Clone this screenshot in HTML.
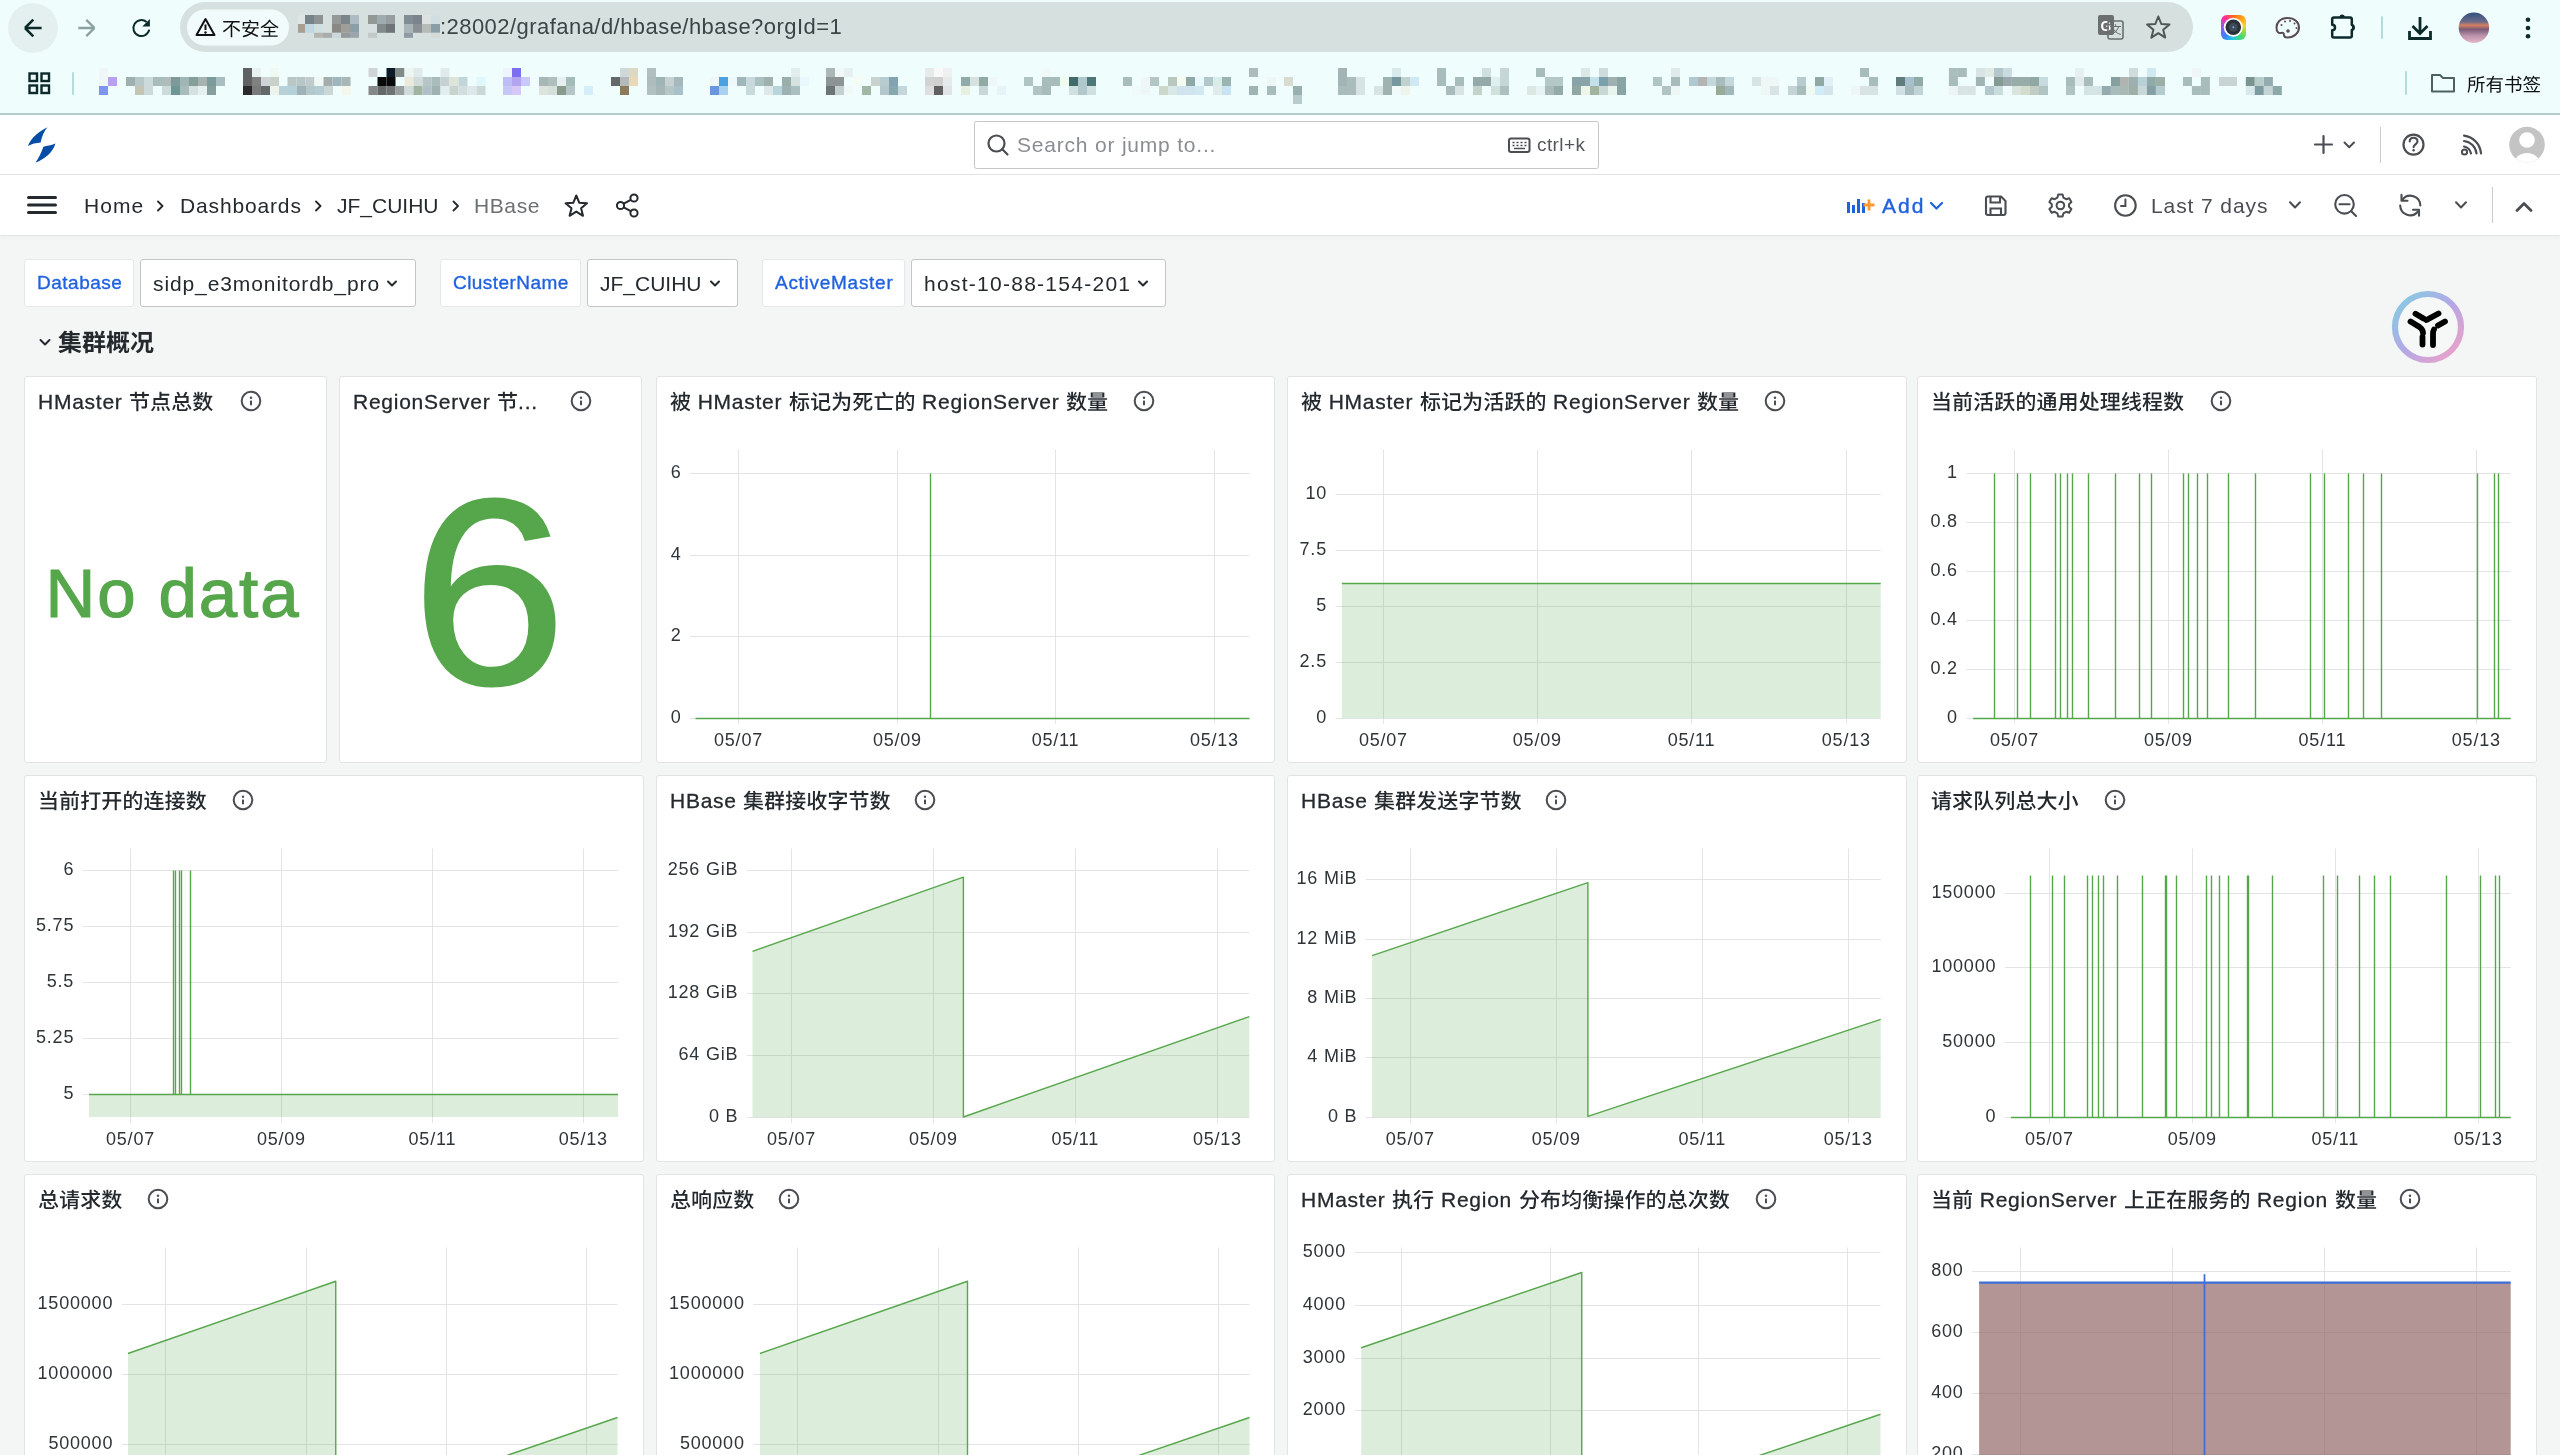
<!DOCTYPE html><html><head><meta charset='utf-8'><style>
*{box-sizing:border-box;margin:0;padding:0}
html,body{width:2560px;height:1455px;overflow:hidden;background:#f4f5f5;font-family:"Liberation Sans", sans-serif;color:#24292e}
.a{position:absolute}
.t{position:absolute;white-space:nowrap;line-height:1}
.panel{position:absolute;background:#fff;border:1px solid #e2e3e5;border-radius:3px}
.ptitle{position:absolute;white-space:nowrap;font-size:21px;font-weight:500;line-height:1;color:#24292e;letter-spacing:0.75px;-webkit-text-stroke:0.3px #24292e}
.ax{font-family:"Liberation Sans", sans-serif;font-size:18px;fill:#2f3439;letter-spacing:0.8px}
</style></head><body><div style='position:absolute;left:0;top:0;width:2560px;height:1455px;overflow:hidden;background:#f4f5f5;will-change:transform'>
<svg width='0' height='0' style='position:absolute'><defs><path id='gr6587' d='M423 57C453 106 485 173 497 214L580 187C566 146 531 81 501 33ZM50 216V290H206C265 442 344 573 447 680C337 772 202 840 36 887C51 905 75 940 83 958C250 904 389 832 502 734C615 834 751 908 915 953C928 932 950 900 967 884C807 844 671 773 560 679C661 576 738 448 796 290H954V216ZM504 627C410 532 336 418 284 290H711C661 425 592 536 504 627Z'/><path id='gr4e0d' d='M559 402C678 482 828 600 899 677L960 619C885 542 733 430 615 354ZM69 110V187H514C415 358 243 527 44 625C60 642 83 672 95 691C234 618 358 515 459 399V958H540V296C566 261 589 224 610 187H931V110Z'/><path id='gr5b89' d='M414 57C430 87 447 124 461 155H93V358H168V226H829V358H908V155H549C534 122 510 74 491 38ZM656 502C625 583 581 648 524 702C452 673 379 647 310 624C335 588 362 546 389 502ZM299 502C263 560 225 614 193 657C276 685 367 718 456 755C359 820 234 862 82 889C98 905 121 939 130 957C293 922 429 870 536 789C662 844 778 903 852 953L914 888C837 839 723 784 599 732C660 671 707 595 742 502H935V431H430C457 381 482 331 502 284L421 268C401 319 372 375 341 431H69V502Z'/><path id='gr5168' d='M493 29C392 188 209 335 26 418C45 434 67 459 78 479C118 459 158 436 197 411V476H461V632H203V699H461V864H76V932H929V864H539V699H809V632H539V476H809V410C847 436 885 460 925 483C936 461 958 435 977 420C814 334 666 230 542 86L559 60ZM200 409C313 336 418 243 500 141C595 250 696 334 807 409Z'/><path id='gr6240' d='M534 141V474C534 613 523 789 404 912C420 922 451 947 462 962C591 832 611 625 611 474V451H766V957H841V451H958V379H611V196C726 178 854 152 939 116L888 52C806 90 659 122 534 141ZM172 519V489V359H370V519ZM441 61C362 97 218 124 98 139V489C98 619 93 792 29 914C45 923 77 948 90 962C147 858 165 713 170 587H442V291H172V195C284 181 408 159 489 124Z'/><path id='gr6709' d='M391 40C379 83 365 127 347 170H63V240H316C252 372 160 494 40 576C54 590 78 617 88 634C151 589 207 535 255 474V959H329V761H748V865C748 880 743 886 726 886C707 887 646 888 580 885C590 906 601 937 605 957C691 957 746 957 779 946C812 933 822 910 822 866V356H336C359 318 379 280 397 240H939V170H427C442 133 455 95 467 58ZM329 591H748V696H329ZM329 527V424H748V527Z'/><path id='gr4e66' d='M717 120C781 163 864 224 905 263L951 206C909 169 824 110 762 70ZM126 215V288H418V485H60V557H418V959H494V557H864C853 702 839 765 819 783C809 792 798 793 777 793C754 793 689 792 626 786C640 807 650 837 652 859C713 862 773 863 804 861C839 858 862 852 882 830C912 801 928 720 943 519C944 508 946 485 946 485H800V215H494V43H418V215ZM494 485V288H726V485Z'/><path id='gr7b7e' d='M424 600C460 665 498 752 512 805L576 779C561 727 521 642 484 578ZM176 628C219 690 266 772 286 823L349 792C329 741 280 661 236 601ZM701 477H294V541H701ZM574 35C548 108 503 179 449 226C460 232 477 242 491 252C388 366 204 460 35 510C52 526 70 551 80 570C152 546 225 515 294 477C370 436 441 387 501 333C606 429 773 518 916 561C927 541 948 513 964 499C816 462 637 378 542 294L563 270L526 251C542 233 558 212 573 190H665C698 233 730 288 744 323L815 305C802 273 774 228 745 190H939V128H611C624 103 635 78 645 52ZM185 35C154 134 99 233 37 297C54 307 85 326 99 338C133 298 167 247 197 190H241C266 234 289 287 299 322L366 302C358 272 338 229 316 190H477V128H227C237 103 247 78 256 53ZM759 583C717 680 658 789 600 867H63V934H934V867H686C734 789 786 690 827 603Z'/><path id='gb96c6' d='M438 601V653H48V748H335C243 799 124 841 15 864C40 889 74 934 92 963C209 930 338 869 438 797V968H557V793C656 865 784 925 901 958C917 930 951 885 976 862C871 839 756 797 667 748H952V653H557V601ZM481 339V379H278V339ZM465 55C475 77 486 103 495 127H334C351 102 366 77 381 52L259 28C213 115 132 219 21 298C48 314 86 352 105 377C124 362 142 347 159 331V618H278V592H926V500H596V458H858V379H596V339H857V261H596V219H902V127H619C608 95 590 56 572 25ZM481 261H278V219H481ZM481 458V500H278V458Z'/><path id='gb7fa4' d='M822 29C810 82 784 155 763 202L846 223H628L691 200C681 154 654 87 623 37L527 70C553 117 577 178 586 223H526V331H674V422H538V532H674V637H504V749H674V969H789V749H971V637H789V532H932V422H789V331H951V223H864C886 179 913 116 938 56ZM356 342V405H268L277 342ZM87 77V177H180L176 242H32V342H166L155 405H82V505H131C106 581 71 646 20 695C43 716 84 765 97 788C111 774 123 760 135 745V970H243V921H484V582H222C231 557 239 532 246 505H466V342H515V242H466V77ZM356 242H288L293 177H356ZM243 685H368V818H243Z'/><path id='gb6982' d='M134 30V232H41V341H134V344C112 464 67 607 17 692C34 720 60 764 71 796C94 758 115 708 134 652V969H239V529C255 569 270 610 279 639L337 545V704C337 752 309 790 290 806C307 823 336 863 345 884C361 865 387 843 534 754L547 797L630 756C616 704 578 619 545 555L468 589C480 615 493 643 504 672L428 713V528H588V449C597 469 616 509 622 530C631 522 666 516 698 516H729C694 654 629 796 510 915C537 928 576 956 595 973C664 900 716 819 754 735V849C754 904 758 920 774 936C788 951 810 957 833 957C845 957 865 957 878 957C896 957 914 951 927 942C941 932 949 917 955 896C960 874 964 817 965 767C945 760 919 746 904 734C905 780 904 819 902 836C900 846 897 854 893 858C890 862 884 863 878 863C872 863 865 863 860 863C854 863 849 861 846 858C843 855 843 848 843 843V564H815L827 516H959L960 419H845C858 332 862 249 863 179H947V77H619V179H771C770 249 765 332 750 419H702L735 226H645C639 272 620 397 612 418C605 435 599 442 588 446V81H337V534C320 501 258 387 239 356V341H316V232H239V30ZM503 345V432H428V345ZM503 260H428V176H503Z'/><path id='gb51b5' d='M55 168C117 218 192 292 223 344L311 253C276 202 200 134 136 88ZM30 765 122 854C186 759 255 646 311 545L233 460C168 571 86 693 30 765ZM472 193H785V404H472ZM357 79V519H453C443 689 418 807 235 876C262 898 294 941 307 971C521 883 559 730 572 519H655V814C655 922 678 958 775 958C792 958 840 958 859 958C942 958 970 913 980 748C949 740 899 721 876 701C873 830 868 850 847 850C837 850 802 850 794 850C774 850 770 846 770 813V519H908V79Z'/><path id='gm8282' d='M97 391V482H348V962H448V482H761V717C761 731 755 735 735 735C716 736 646 736 580 734C592 762 605 804 608 833C702 833 766 833 807 818C848 802 859 773 859 719V391ZM626 36V143H375V36H279V143H53V233H279V340H375V233H626V340H726V233H949V143H726V36Z'/><path id='gm70b9' d='M250 424H746V581H250ZM331 752C344 819 352 905 352 956L448 944C447 894 435 809 421 744ZM537 753C567 816 597 902 607 953L699 929C687 878 654 795 624 734ZM741 746C790 811 845 900 868 957L958 920C934 863 876 777 826 714ZM168 721C137 795 87 875 36 920L123 962C177 909 227 823 258 744ZM160 336V669H842V336H542V223H913V134H542V36H446V336Z'/><path id='gm603b' d='M752 667C810 736 868 830 888 893L966 846C945 782 884 692 825 625ZM275 635V832C275 927 308 954 440 954C467 954 624 954 652 954C753 954 783 924 796 805C768 800 728 785 706 771C701 855 692 868 644 868C607 868 476 868 448 868C386 868 375 863 375 831V635ZM127 650C110 729 78 818 38 869L126 910C169 848 201 751 217 666ZM279 323H722V477H279ZM178 234V567H481L415 619C478 663 552 732 588 780L658 719C621 674 548 609 484 567H829V234H676C708 185 741 129 771 76L673 36C650 96 609 175 572 234H376L434 206C417 157 372 89 329 39L248 76C286 124 324 188 342 234Z'/><path id='gm6570' d='M435 52C418 90 387 147 363 183L424 211C451 179 483 130 514 85ZM79 85C105 126 130 181 138 216L210 184C201 149 174 96 147 57ZM394 630C373 674 345 713 312 746C279 729 245 713 212 698L250 630ZM97 729C144 748 197 773 246 799C185 840 113 869 35 886C51 904 69 937 78 958C169 933 253 896 323 841C355 860 383 878 405 895L462 833C440 818 413 802 384 785C436 727 476 656 501 568L450 549L435 552H288L307 506L224 490C216 510 208 531 198 552H66V630H158C138 667 116 701 97 729ZM246 35V218H47V294H217C168 352 97 406 32 433C50 451 71 483 82 504C138 473 198 425 246 372V478H334V353C378 386 429 427 453 450L504 383C483 369 410 323 360 294H532V218H334V35ZM621 42C598 219 553 388 474 493C494 506 530 537 544 552C566 519 587 482 605 441C626 529 652 610 686 683C631 773 555 842 450 891C467 909 492 948 501 968C600 916 675 851 732 769C780 847 840 910 914 955C928 932 955 898 976 881C896 838 833 769 783 683C834 582 866 460 887 313H953V226H675C688 171 699 113 708 54ZM799 313C785 416 765 505 735 583C702 501 677 410 660 313Z'/><path id='gm88ab' d='M132 74C159 116 191 172 207 210H40V295H258C203 415 112 536 24 606C37 623 58 671 65 696C98 667 133 631 166 590V963H254V577C286 621 319 672 336 702L385 629L316 544C343 519 375 486 407 454L351 402C333 430 303 470 277 499L254 473V467C298 396 337 320 364 243L317 206L303 210H220L285 171C267 135 234 80 205 38ZM420 178V443C420 582 409 768 301 897C320 909 356 940 370 958C469 838 499 662 505 517C538 615 583 700 640 770C580 822 511 861 437 886C455 905 476 940 487 963C566 932 638 890 701 834C761 889 831 931 914 960C927 935 953 898 973 880C892 856 823 819 765 770C836 686 890 579 921 444L865 422L849 425H721V266H849C838 309 827 351 816 380L896 399C918 346 941 263 960 190L893 175L879 178H721V36H632V178ZM632 266V425H507V266ZM813 509C787 585 749 652 701 708C652 651 614 584 586 509Z'/><path id='gm6807' d='M466 106V194H905V106ZM776 559C822 661 865 792 879 873L965 841C949 760 903 632 856 533ZM480 537C454 642 411 750 357 820C378 831 415 856 432 870C485 792 536 672 565 556ZM422 345V433H628V846C628 859 624 863 610 863C596 864 552 864 505 862C518 891 530 932 533 959C602 959 650 958 682 942C715 926 724 898 724 848V433H959V345ZM190 36V241H43V330H170C140 449 81 586 20 660C37 684 61 725 71 751C116 691 157 597 190 498V963H283V461C314 508 349 563 364 594L417 519C398 493 312 386 283 354V330H408V241H283V36Z'/><path id='gm8bb0' d='M115 115C170 165 242 236 275 281L343 214C307 170 234 103 178 57ZM43 347V438H196V775C196 827 166 863 147 879C163 893 188 928 198 948C214 927 243 904 412 783C402 764 389 726 383 700L290 764V347ZM417 104V198H805V429H436V808C436 920 475 949 597 949C623 949 781 949 808 949C924 949 954 902 967 734C939 728 898 712 876 695C870 833 860 858 802 858C766 858 633 858 605 858C544 858 534 850 534 808V519H805V570H900V104Z'/><path id='gm4e3a' d='M150 97C188 144 232 209 250 250L337 211C317 169 272 107 233 62ZM491 517C539 576 595 659 618 711L703 667C678 615 620 537 570 479ZM399 38V164C399 198 398 234 396 273H78V369H385C358 541 279 733 52 878C76 894 112 927 127 948C376 784 458 563 484 369H805C793 685 779 814 749 844C738 857 727 860 706 859C680 859 619 859 554 854C573 882 586 924 588 952C649 955 711 957 748 952C787 948 813 938 838 905C878 858 891 715 905 320C906 307 907 273 907 273H493C495 235 496 198 496 164V38Z'/><path id='gm6b7b' d='M861 315C813 364 742 421 670 471V187H948V96H55V187H240C201 314 129 453 33 540C54 555 86 583 102 601C155 551 201 488 240 419H421C403 491 378 554 347 610C311 574 263 535 223 505L169 573C211 606 259 650 295 688C228 774 141 835 39 876C60 891 93 929 106 951C315 860 472 673 530 349L470 327L453 330H285C307 283 326 234 342 187H575V789C575 899 601 930 700 930C720 930 819 930 839 930C927 930 952 882 963 738C936 731 899 715 877 698C873 815 867 843 832 843C811 843 730 843 713 843C676 843 670 835 670 789V567C760 514 856 454 931 393Z'/><path id='gm4ea1' d='M417 64C448 121 479 197 491 245H52V338H189V910H886V813H290V338H951V245H514L599 217C585 167 550 91 516 34Z'/><path id='gm7684' d='M545 465C598 538 663 637 692 698L772 648C740 589 672 493 619 423ZM593 34C562 166 508 300 442 387V197H279C296 154 316 101 332 51L229 34C223 83 208 148 195 197H81V937H168V860H442V396C464 410 500 434 515 448C548 402 580 344 608 279H845C833 660 819 812 788 846C776 859 765 862 745 862C720 862 660 862 595 856C613 882 625 922 627 948C684 951 744 952 779 948C817 943 842 934 867 900C908 850 920 693 935 237C935 225 935 192 935 192H642C658 147 672 101 684 55ZM168 281H355V471H168ZM168 775V553H355V775Z'/><path id='gm91cf' d='M266 214H728V261H266ZM266 119H728V165H266ZM175 67V312H823V67ZM49 350V419H953V350ZM246 610H453V657H246ZM545 610H757V657H545ZM246 512H453V559H246ZM545 512H757V559H545ZM46 869V940H957V869H545V820H871V757H545V711H851V458H157V711H453V757H132V820H453V869Z'/><path id='gm6d3b' d='M87 116C147 149 231 198 273 227L328 151C285 123 199 77 141 49ZM39 392C99 424 184 472 225 501L278 423C234 395 148 350 91 323ZM59 888 138 952C198 857 265 736 318 631L249 568C190 683 112 812 59 888ZM324 328V419H604V568H392V963H479V921H812V959H902V568H694V419H961V328H694V170C777 155 855 135 920 112L847 38C736 80 539 112 367 130C378 151 390 187 395 210C462 204 534 196 604 185V328ZM479 835V654H812V835Z'/><path id='gm8dc3' d='M159 158H308V313H159ZM856 44C758 82 591 115 445 134C456 155 469 189 472 211C527 205 584 197 642 187V391V398H437V486H639C628 623 581 785 385 902C407 918 438 951 452 970C595 877 666 761 702 646C745 788 811 900 914 966C928 941 957 906 978 888C851 818 779 666 744 486H951V398H735V392V170C804 155 870 139 925 119ZM29 835 51 925C153 896 288 857 414 821L403 739L289 770V607H401V525H289V394H391V77H79V394H205V792L152 805V487H77V824Z'/><path id='gm5f53' d='M114 112C166 182 218 280 238 344L329 305C307 241 255 147 200 78ZM788 69C760 147 709 252 667 319L750 350C794 285 848 188 891 101ZM112 828V922H776V964H877V386H551V36H448V386H132V481H776V603H166V694H776V828Z'/><path id='gm524d' d='M595 366V777H682V366ZM796 337V853C796 867 791 871 775 872C759 873 705 873 649 871C663 895 678 935 683 961C758 961 810 959 844 944C879 929 890 904 890 854V337ZM711 32C690 79 655 143 623 190H330L383 171C365 132 324 76 286 35L197 66C229 104 264 153 282 190H50V276H951V190H730C757 151 786 106 813 63ZM397 591V677H199V591ZM397 519H199V437H397ZM109 356V959H199V748H397V863C397 875 393 879 380 880C367 881 323 881 278 879C291 901 304 937 309 961C375 961 419 960 449 945C480 931 489 908 489 864V356Z'/><path id='gm901a' d='M57 130C116 182 193 255 229 301L298 237C260 192 180 122 121 74ZM264 414H38V502H173V767C130 786 81 827 33 877L91 956C139 892 187 833 221 833C243 833 276 866 317 889C387 931 469 942 593 942C701 942 873 937 946 932C947 907 961 865 971 841C868 853 709 861 596 861C485 861 398 855 332 815C302 796 282 780 264 769ZM366 70V144H759C725 170 685 196 646 216C598 195 548 175 505 160L445 212C499 233 562 260 618 287H362V805H451V646H596V801H681V646H831V716C831 728 828 732 815 733C804 733 765 733 724 732C735 753 745 784 749 808C813 808 856 807 885 794C914 781 922 760 922 718V287H789L790 286C772 276 750 264 726 253C797 212 868 161 920 111L863 65L844 70ZM831 357V431H681V357ZM451 499H596V575H451ZM451 431V357H596V431ZM831 499V575H681V499Z'/><path id='gm7528' d='M148 105V465C148 606 138 785 28 908C49 920 88 951 102 970C176 888 212 775 229 664H460V954H555V664H799V844C799 863 792 869 773 869C755 870 687 871 623 867C636 892 651 934 654 958C747 959 807 958 844 943C880 928 893 900 893 845V105ZM242 195H460V337H242ZM799 195V337H555V195ZM242 425H460V574H238C241 536 242 500 242 466ZM799 425V574H555V425Z'/><path id='gm5904' d='M412 282C395 409 365 514 324 600C288 537 257 459 233 361L258 282ZM210 39C182 236 122 429 46 532C71 544 105 569 123 585C145 556 165 521 184 481C209 563 239 632 274 688C210 781 128 847 29 893C53 908 92 945 108 967C197 922 273 859 335 772C455 906 611 938 781 938H935C940 911 957 862 972 839C929 840 820 840 786 840C638 840 496 813 387 689C453 567 498 409 519 208L456 191L438 194H282C293 150 302 106 310 61ZM604 37V778H705V378C766 454 829 539 861 597L945 546C901 472 807 359 733 276L705 292V37Z'/><path id='gm7406' d='M492 346H624V456H492ZM705 346H834V456H705ZM492 161H624V270H492ZM705 161H834V270H705ZM323 846V932H970V846H712V726H937V640H712V537H924V80H406V537H616V640H397V726H616V846ZM30 769 53 866C144 836 262 796 371 759L355 669L250 703V475H347V388H250V187H362V99H41V187H160V388H51V475H160V731C112 746 67 759 30 769Z'/><path id='gm7ebf' d='M51 818 71 909C165 879 286 840 402 802L388 724C263 760 135 798 51 818ZM705 101C751 126 811 166 841 194L897 136C867 110 806 73 760 50ZM73 461C88 453 112 448 219 435C180 491 145 535 127 553C96 591 74 614 50 619C61 643 75 685 79 703C102 690 139 680 387 630C385 611 386 575 389 551L208 582C281 496 352 394 412 291L334 242C315 279 294 317 272 352L164 361C223 280 279 178 320 80L232 38C194 155 123 281 101 313C79 346 62 368 42 373C53 398 68 443 73 461ZM876 530C840 586 793 638 738 684C725 636 713 581 704 520L948 474L933 391L692 435C688 399 684 360 681 321L921 284L905 201L676 235C673 170 671 102 672 33H579C579 106 581 178 585 249L432 272L448 357L590 335C593 375 597 414 601 452L412 487L427 572L613 537C625 613 640 682 658 742C575 796 479 840 378 870C400 891 424 924 436 948C526 916 612 875 690 825C730 911 783 962 851 962C925 962 952 930 968 813C947 803 918 783 899 761C895 846 885 871 861 871C826 871 794 834 767 770C842 711 906 644 955 567Z'/><path id='gm7a0b' d='M549 156H821V321H549ZM461 76V401H913V76ZM449 663V744H636V856H384V940H966V856H730V744H921V663H730V559H944V477H426V559H636V663ZM352 48C277 83 149 112 37 130C48 150 60 182 64 203C107 197 154 190 200 181V317H45V406H187C149 513 86 634 25 702C40 725 62 764 71 790C117 733 162 647 200 556V963H292V547C322 588 355 636 370 663L425 589C405 565 319 476 292 453V406H410V317H292V160C337 149 380 136 417 121Z'/><path id='gm6253' d='M188 36V233H46V323H188V518L37 556L64 650L188 616V847C188 861 182 866 168 866C155 867 112 867 68 865C80 891 94 930 97 955C168 955 212 953 242 937C272 923 283 898 283 848V589L423 548L411 459L283 493V323H410V233H283V36ZM421 116V211H692V833C692 851 685 857 665 858C644 858 570 859 502 855C517 883 535 930 540 958C634 958 699 957 740 940C780 923 794 893 794 834V211H965V116Z'/><path id='gm5f00' d='M638 188V456H381V419V188ZM49 456V546H277C261 674 208 800 49 898C73 913 109 947 125 968C305 854 360 700 376 546H638V965H737V546H953V456H737V188H922V98H85V188H284V418V456Z'/><path id='gm8fde' d='M78 93C128 149 188 227 214 277L292 223C263 174 201 99 150 46ZM257 372H42V459H166V756C122 775 72 818 22 876L92 969C133 903 176 837 207 837C229 837 264 872 307 899C381 943 465 954 597 954C700 954 877 948 949 943C951 914 967 864 978 838C877 851 717 860 601 860C484 860 393 853 326 811C296 793 275 777 257 765ZM376 481C385 471 423 465 470 465H617V581H316V670H617V835H714V670H944V581H714V465H898L899 377H714V265H617V377H473C500 330 527 276 551 220H929V138H585L613 62L514 35C505 69 494 105 482 138H325V220H450C429 270 410 310 400 326C380 362 364 386 344 390C355 416 371 461 376 481Z'/><path id='gm63a5' d='M151 37V232H39V320H151V523C104 537 60 549 25 557L47 648L151 616V856C151 869 146 873 134 873C123 873 88 873 50 872C62 897 73 937 76 960C136 961 176 957 202 942C228 927 238 903 238 856V589L333 559L320 473L238 498V320H331V232H238V37ZM565 57C578 80 593 108 605 134H383V215H931V134H703C690 105 672 71 653 44ZM760 219C743 263 710 325 684 366H532L595 339C583 306 554 255 526 217L453 246C479 283 504 332 516 366H350V448H955V366H775C798 330 824 286 847 244ZM394 748C456 767 524 791 591 819C524 852 436 872 321 883C335 902 351 936 358 962C501 942 608 911 687 860C764 896 834 933 881 966L940 894C894 864 830 831 759 799C800 754 829 698 849 628H966V548H619C634 520 648 492 659 465L572 448C559 480 542 514 523 548H336V628H477C449 673 420 714 394 748ZM754 628C736 683 710 727 673 763C623 743 572 724 524 708C540 684 557 656 574 628Z'/><path id='gm96c6' d='M451 593V654H51V731H370C275 794 141 849 23 877C43 896 70 932 84 955C208 919 349 849 451 767V963H545V765C646 845 787 913 912 949C925 926 951 891 971 872C854 845 723 792 630 731H949V654H545V593ZM486 333V388H260V333ZM466 56C480 81 494 111 504 138H307C326 109 343 80 359 52L263 34C218 121 137 230 26 311C48 324 78 353 94 373C120 352 144 330 167 308V613H260V584H922V510H577V452H853V388H577V333H851V268H577V213H893V138H604C592 106 571 64 551 32ZM486 268H260V213H486ZM486 452V510H260V452Z'/><path id='gm7fa4' d='M838 35C824 87 795 161 771 208L849 229C874 184 903 117 930 56ZM536 69C565 118 591 184 601 230H528V316H686V432H542V519H686V647H506V736H686V964H777V736H967V647H777V519H928V432H777V316H946V230H616L683 205C673 160 644 93 612 43ZM375 330V413H259C264 386 269 359 273 330ZM92 84V165H200L193 249H39V330H184C180 359 175 386 169 413H86V494H149C122 582 82 655 24 711C43 727 76 766 86 784C107 763 125 740 142 716V964H229V913H479V586H210C222 557 231 526 240 494H463V330H518V249H463V84ZM375 249H282L290 165H375ZM229 668H386V830H229Z'/><path id='gm6536' d='M605 316H799C780 433 751 533 707 618C660 534 623 438 598 336ZM576 35C549 208 498 369 413 469C433 487 466 530 479 550C504 520 527 485 547 448C576 541 612 628 656 704C600 782 527 843 432 889C451 907 482 947 493 966C581 918 652 858 709 785C763 857 828 917 904 960C919 936 948 900 970 883C889 842 820 781 763 705C825 599 867 470 894 316H961V227H634C650 171 663 112 673 51ZM93 791C114 774 144 757 317 696V965H411V51H317V605L184 647V146H91V634C91 675 72 694 56 704C70 725 86 767 93 791Z'/><path id='gm5b57' d='M449 516V575H66V665H449V850C449 864 443 869 425 869C406 870 336 870 272 868C288 893 306 935 313 963C396 963 454 962 495 947C537 932 550 906 550 853V665H933V575H550V546C637 498 721 432 782 369L719 320L696 325H234V413H601C556 452 501 490 449 516ZM415 57C432 80 448 109 461 136H75V353H168V226H827V353H925V136H573C559 103 535 61 509 28Z'/><path id='gm53d1' d='M671 89C712 135 767 199 793 236L870 186C842 149 785 88 744 45ZM140 366C149 354 187 347 246 347H382C317 549 207 707 25 811C48 828 82 865 95 886C221 812 315 717 384 601C421 665 465 721 516 770C434 823 339 861 239 884C257 904 279 941 289 966C399 936 503 893 592 832C680 895 785 939 911 966C924 940 950 901 971 881C854 860 753 823 669 772C754 695 821 596 862 469L796 439L778 443H460C472 412 482 380 492 347H937V257H516C531 191 543 122 553 48L448 31C438 111 425 186 408 257H244C271 204 299 140 317 78L216 61C198 139 160 218 148 239C135 261 123 275 109 280C119 302 134 347 140 366ZM590 715C529 664 480 604 443 535H729C695 605 647 665 590 715Z'/><path id='gm9001' d='M73 89C124 147 184 228 212 278L293 227C263 177 200 100 149 45ZM409 70C436 115 469 177 487 216H352V302H576V416V432H319V519H564C543 599 483 685 321 749C343 766 372 800 386 820C525 758 599 679 637 598C716 672 802 756 848 810L914 744C861 686 759 594 675 519H948V432H674V417V302H917V216H785C815 170 847 115 876 65L780 35C759 89 723 162 689 216H509L575 186C557 148 518 85 488 38ZM257 372H45V459H166V755C121 772 68 817 16 876L84 968C126 902 170 837 200 837C222 837 258 872 301 898C375 942 460 953 592 953C696 953 875 947 947 942C948 914 965 864 976 838C874 851 713 860 596 860C479 860 388 854 320 812C293 796 274 781 257 770Z'/><path id='gm8bf7' d='M95 112C148 160 216 227 248 271L312 204C279 163 209 99 156 55ZM38 347V438H176V780C176 825 147 857 127 870C143 888 167 927 175 950C191 928 220 904 394 768C384 749 369 713 363 687L267 760V347ZM508 676H798V747H508ZM508 613V548H798V613ZM606 36V110H380V179H606V233H406V299H606V357H349V427H963V357H699V299H902V233H699V179H933V110H699V36ZM419 477V964H508V813H798V865C798 878 794 882 780 882C767 882 719 883 672 880C683 903 695 938 699 962C769 962 816 961 847 948C879 934 888 910 888 867V477Z'/><path id='gm6c42' d='M106 387C168 444 239 525 269 579L346 522C314 468 240 391 178 338ZM36 779 97 865C197 806 326 728 449 650V842C449 861 442 867 424 867C404 868 340 868 274 866C288 894 303 938 307 965C396 966 458 963 496 946C532 931 546 903 546 842V499C631 666 749 803 901 879C916 852 948 814 970 795C867 751 777 677 704 586C768 530 846 453 906 384L823 326C781 386 713 460 653 516C609 449 573 375 546 298V288H942V196H826L868 148C827 115 745 68 683 38L627 98C678 125 743 164 786 196H546V38H449V196H62V288H449V551C299 637 135 729 36 779Z'/><path id='gm961f' d='M93 76V962H182V161H321C299 227 269 313 242 380C315 454 335 521 335 572C335 602 329 626 314 636C304 641 293 644 281 644C265 645 246 645 224 643C239 668 247 707 248 731C273 733 300 732 321 729C343 726 364 720 379 709C412 686 426 643 426 582C426 522 410 450 334 369C369 292 407 195 438 112L371 73L356 76ZM612 38C610 374 618 717 338 894C364 912 395 941 410 965C551 871 625 736 664 582C704 718 774 872 907 965C922 940 950 912 977 893C752 745 713 430 701 334C708 237 708 137 709 38Z'/><path id='gm5217' d='M631 148V715H724V148ZM837 43V848C837 864 832 870 815 870C799 870 746 870 692 869C705 894 719 935 723 960C802 960 854 958 887 943C920 928 933 903 933 848V43ZM177 586C222 620 278 665 315 700C250 789 167 854 71 891C90 910 115 947 128 971C348 871 498 672 546 323L488 306L470 309H265C278 266 291 222 301 177H571V86H56V177H205C172 323 119 457 42 544C63 559 100 591 115 609C161 552 201 479 234 396H443C426 479 399 553 366 618C329 585 274 544 232 515Z'/><path id='gm5927' d='M448 36C447 117 448 214 436 315H60V413H419C379 596 281 777 40 883C67 903 97 937 112 962C341 854 450 680 502 498C581 710 703 873 892 961C907 934 939 894 963 873C771 794 644 623 575 413H944V315H537C549 215 550 118 551 36Z'/><path id='gm5c0f' d='M452 50V840C452 860 445 866 424 867C403 868 330 868 259 865C275 892 292 937 298 964C393 964 458 962 499 946C539 930 555 903 555 840V50ZM693 308C776 453 855 641 877 761L980 720C954 598 870 415 785 274ZM190 282C167 415 113 589 28 693C54 704 96 727 119 743C207 632 264 449 297 300Z'/><path id='gm54cd' d='M70 127V793H153V700H331V127ZM153 214H252V612H153ZM613 34C602 84 581 150 561 202H396V958H486V284H847V861C847 873 843 877 830 878C818 878 776 879 737 876C748 900 761 938 764 962C828 963 871 961 901 946C930 932 939 907 939 862V202H659C680 157 702 104 722 55ZM620 450H715V656H620ZM555 383V779H620V724H778V383Z'/><path id='gm5e94' d='M261 390C302 499 350 642 369 735L458 698C436 605 388 467 344 357ZM470 332C503 440 539 583 552 676L644 650C628 556 591 418 556 308ZM462 50C478 83 495 124 508 159H115V431C115 574 109 777 32 919C55 928 98 956 115 972C198 820 211 586 211 431V249H947V159H615C601 121 577 68 556 26ZM212 831V921H959V831H697C788 680 861 502 909 338L809 303C770 475 696 678 599 831Z'/><path id='gm6267' d='M164 36V238H46V326H164V521C114 536 68 549 30 559L54 651L164 615V854C164 868 159 872 147 872C135 873 97 873 57 871C69 898 80 938 84 962C148 963 189 959 217 944C245 928 254 903 254 854V586L366 549L352 463L254 494V326H351V238H254V36ZM736 329C734 447 732 551 734 639C697 611 642 576 584 541C595 477 601 406 604 329ZM515 35C517 109 518 178 517 243H373V329H515C512 388 508 442 501 493L417 446L364 511C401 532 443 557 484 583C452 718 390 820 276 891C296 909 332 951 343 969C461 884 527 775 564 634C611 665 653 694 681 718L734 648C739 849 765 964 860 964C930 964 959 925 969 787C947 779 911 761 892 743C889 839 881 875 865 875C815 875 820 646 833 243H607C608 178 608 109 607 35Z'/><path id='gm884c' d='M440 95V185H930V95ZM261 35C211 107 115 197 31 252C48 270 73 308 85 329C178 263 283 164 352 73ZM397 371V461H716V848C716 863 709 868 690 868C672 869 605 869 540 867C554 894 566 934 570 961C664 961 724 960 762 946C800 931 812 904 812 849V461H958V371ZM301 251C233 365 123 481 21 554C40 573 73 615 86 635C119 609 152 578 186 544V966H281V438C322 389 359 336 390 285Z'/><path id='gm5206' d='M680 51 592 85C646 197 726 316 807 409H217C297 318 369 203 418 81L317 53C259 205 157 345 39 430C62 447 102 484 120 504C144 484 168 462 191 437V503H369C347 662 293 809 61 885C83 905 110 943 121 967C377 874 443 697 469 503H715C704 732 692 826 668 850C658 860 646 862 627 862C603 862 545 862 484 857C501 883 513 924 515 952C577 955 637 955 671 952C707 948 732 939 754 911C789 871 802 755 815 452L817 420C841 448 866 473 890 495C907 469 942 433 966 415C862 333 741 183 680 51Z'/><path id='gm5e03' d='M388 34C375 84 359 134 339 184H57V275H298C233 404 142 522 25 600C43 621 68 659 80 682C131 647 177 606 218 560V873H313V534H502V964H597V534H797V762C797 775 792 779 776 779C761 780 704 780 648 778C661 802 675 838 679 864C760 865 814 863 848 850C883 835 893 810 893 763V445H597V319H502V445H308C344 391 376 334 403 275H945V184H442C458 142 473 99 486 57Z'/><path id='gm5747' d='M484 429C542 478 618 549 655 590L714 527C676 487 602 423 540 375ZM402 752 439 839C543 783 680 706 806 633L784 559C646 632 496 709 402 752ZM32 744 65 841C161 790 286 724 402 660L379 582L249 645V362H357L353 366C372 385 402 425 415 444C459 399 503 342 542 279H845C836 671 823 829 791 862C780 875 768 879 748 878C722 878 660 878 591 872C607 898 619 936 621 962C681 965 746 966 783 962C822 957 846 948 871 914C910 863 922 703 934 239C934 226 934 192 934 192H592C614 150 633 106 650 63L564 36C520 158 445 277 363 357V273H249V48H158V273H40V362H158V688C110 710 67 729 32 744Z'/><path id='gm8861' d='M192 35C160 100 94 183 35 235C50 252 72 287 84 307C153 245 229 151 278 67ZM733 102V187H941V102ZM460 625 455 673H286V749H436C412 814 365 862 272 893C288 908 310 938 319 957C415 923 470 871 502 804C553 845 606 894 633 929L690 871C661 836 607 789 554 749H707V673H537L543 625ZM429 190H537C526 218 513 247 501 270H386C402 244 417 217 429 190ZM211 241C166 343 95 448 25 518C41 537 68 582 78 602C98 580 119 555 140 528V964H226V399C240 375 254 350 267 325C284 337 304 354 314 367L317 364V610H685V270H586C607 232 628 188 643 149L588 113L575 117H460L482 54L397 41C377 110 342 195 288 267ZM387 471H468V544H387ZM537 471H612V544H537ZM387 336H468V408H387ZM537 336H612V408H537ZM711 349V435H802V861C802 871 799 874 788 875C777 875 743 875 707 874C718 899 728 936 731 960C787 960 826 958 852 944C880 930 887 905 887 861V435H962V349Z'/><path id='gm64cd' d='M540 144H749V231H540ZM458 75V300H836V75ZM434 407H544V504H434ZM743 407H857V504H743ZM148 36V232H43V320H148V522C104 537 64 550 31 559L54 650L148 616V857C148 869 145 872 134 872C125 872 97 873 66 872C77 896 88 933 91 956C144 956 180 953 204 939C229 925 237 901 237 857V584L333 548L318 464L237 492V320H327V232H237V36ZM346 640V718H550C482 785 378 843 276 872C296 889 322 923 335 945C432 911 528 851 600 777V966H690V773C751 842 833 903 912 937C926 914 952 881 972 865C886 836 795 779 737 718H955V640H690V571H935V341H669V569H620V341H362V571H600V640Z'/><path id='gm4f5c' d='M521 47C473 192 393 338 304 430C325 445 362 478 376 495C425 441 472 370 514 292H570V964H667V729H956V640H667V506H942V419H667V292H966V201H560C579 158 597 114 613 70ZM270 40C216 188 126 334 30 429C47 451 74 504 83 527C111 498 139 465 166 428V963H262V279C300 211 334 139 362 68Z'/><path id='gm6b21' d='M50 172C118 212 205 273 246 315L306 237C263 196 175 140 107 104ZM36 803 124 868C186 774 257 661 314 556L240 494C176 606 93 729 36 803ZM446 36C416 197 358 355 278 451C303 463 350 489 370 504C410 448 447 376 478 294H822C803 360 777 429 755 475C778 485 816 504 836 515C871 443 915 335 941 234L871 194L853 200H510C525 153 537 104 548 54ZM560 334V397C560 535 536 752 241 895C265 913 299 947 314 970C494 879 582 759 624 644C680 790 766 898 904 957C918 932 947 892 968 873C796 811 705 662 660 470C661 445 662 421 662 399V334Z'/><path id='gm4e0a' d='M417 50V821H48V916H953V821H518V444H884V349H518V50Z'/><path id='gm6b63' d='M179 369V830H48V923H954V830H578V537H878V445H578V198H923V105H85V198H478V830H277V369Z'/><path id='gm5728' d='M382 35C369 84 352 134 332 184H59V275H291C228 398 142 510 32 585C47 608 69 649 79 675C117 648 152 619 184 587V961H279V476C325 413 364 346 398 275H942V184H437C453 143 468 101 481 59ZM593 322V504H376V591H593V852H337V940H941V852H688V591H902V504H688V322Z'/><path id='gm670d' d='M100 72V433C100 581 96 782 29 922C51 930 90 951 106 966C150 872 170 748 179 629H315V855C315 869 310 873 297 874C284 874 244 875 202 873C215 897 226 940 228 964C295 964 337 962 365 947C394 931 402 903 402 857V72ZM186 160H315V303H186ZM186 390H315V539H184L186 433ZM844 504C824 576 795 642 760 699C720 641 687 574 664 504ZM476 74V964H566V892C585 908 608 939 620 960C672 929 720 889 763 841C808 892 859 934 916 965C930 942 956 909 977 892C917 864 863 822 817 771C877 681 922 569 947 433L892 415L876 418H566V162H827V266C827 278 822 282 806 282C791 283 735 283 679 281C690 304 703 336 708 361C784 361 837 361 872 348C908 336 918 312 918 268V74ZM583 504C614 603 656 694 709 771C666 822 618 863 566 890V504Z'/><path id='gm52a1' d='M434 500C430 534 424 565 416 593H122V675H384C325 789 219 851 54 883C71 902 99 942 108 963C299 914 420 831 486 675H775C759 790 740 847 717 864C705 873 693 874 671 874C645 874 577 873 512 867C528 890 541 925 542 950C605 954 666 954 700 952C740 950 767 944 792 921C828 889 851 811 874 633C876 620 878 593 878 593H514C521 566 527 538 532 508ZM729 215C671 268 594 310 505 345C431 314 371 275 329 226L340 215ZM373 35C321 121 225 218 83 287C102 302 128 337 140 359C187 334 229 306 267 277C304 317 348 352 398 381C286 413 164 433 45 444C59 466 75 503 82 527C226 510 373 480 505 432C621 477 759 503 913 515C924 490 946 452 966 431C839 424 721 409 620 383C728 329 819 259 879 169L821 131L806 135H414C435 109 453 81 470 54Z'/></defs></svg>
<div class='a' style='left:0;top:0;width:2560px;height:115px;background:#f0fdfd;border-bottom:2px solid #b6cbcb'></div>
<div class='a' style='left:7.8px;top:2.6px;width:50px;height:50px;border-radius:25px;background:#e4f0f0'></div>
<div class='a' style='left:2221px;top:15px;width:24.5px;height:24.5px;border-radius:6px;background:conic-gradient(from 0deg, #ff6a1a, #ffd21a 22%, #4cd964 38%, #22c8e8 52%, #3b82f6 62%, #8b5cf6 75%, #ff2d9a 88%, #ff6a1a)'></div>

<svg class='a' style='left:0;top:0' width='2560' height='114' viewBox='0 0 2560 114'>
 <g fill='none' stroke='#0d2a2a' stroke-width='2.5' stroke-linecap='butt'>
  <path d='M25 28 H41.6 M25 28 L33.3 19.7 M25 28 L33.3 36.3'/>
 </g>
 <g fill='none' stroke='#8aa3a1' stroke-width='2.4'>
  <path d='M78.3 28 H94.5 M94.5 28 L86.3 19.8 M94.5 28 L86.3 36.2'/>
 </g>
 <path d='M149.2 29.6 A8 8 0 1 1 146.6 22' fill='none' stroke='#0d2a2a' stroke-width='2'/>
 <path d='M149.9 18.9 V26.6 H142.3 Z' fill='#0d2a2a'/>
 <rect x='180' y='2' width='2013' height='50' rx='25' fill='#d5e0df'/>
 <rect x='187' y='9.5' width='102' height='36' rx='18' fill='#f2fbfb'/>
 <g fill='none' stroke='#111' stroke-width='2'>
  <path d='M205.5 19 L196.5 35 H214.5 Z' stroke-linejoin='round'/>
 </g>
 <path d='M205.5 24.5 V30' stroke='#111' stroke-width='2'/>
 <circle cx='205.5' cy='32.5' r='1.2' fill='#111'/>
 <!-- translate icon -->
 <rect x='2098' y='15' width='16' height='20' rx='2' fill='#6b6f70'/>
 <text x='2100.5' y='31' font-family='Liberation Sans' font-weight='700' font-size='14' fill='#fff'>G</text>
 <rect x='2108' y='21' width='15' height='18' rx='2' fill='none' stroke='#6b6f70' stroke-width='1.6'/>
 <use href='#gr6587' fill='#6b6f70' transform='translate(2109.5 23.5) scale(0.012)'/>
 <!-- star -->
 <path d='M2158.3 16.5 L2161.3 24 L2169.5 24.5 L2163.2 29.7 L2165.2 37.6 L2158.3 33.2 L2151.4 37.6 L2153.4 29.7 L2147.1 24.5 L2155.3 24 Z' fill='none' stroke='#505556' stroke-width='2' stroke-linejoin='round'/>
 <!-- camera ext -->
 <defs>
  <linearGradient id='rb' x1='0' y1='0' x2='1' y2='1'>
   <stop offset='0' stop-color='#ff2f92'/><stop offset='0.35' stop-color='#ff8a1c'/><stop offset='0.6' stop-color='#e9e51d'/><stop offset='0.8' stop-color='#1cd6a8'/><stop offset='1' stop-color='#3a6bff'/>
  </linearGradient>
  <linearGradient id='rb2' x1='1' y1='0' x2='0' y2='1'>
   <stop offset='0' stop-color='#ffb000'/><stop offset='0.5' stop-color='#ff2f92' stop-opacity='0'/><stop offset='1' stop-color='#7a3cff'/>
  </linearGradient>
 </defs>
 <circle cx='2233.3' cy='27.3' r='9.5' fill='#fff'/>
 <circle cx='2233.3' cy='27.3' r='7.8' fill='#2b3038'/>
 <circle cx='2233.3' cy='27.3' r='4.5' fill='#3e4a58'/>
 <circle cx='2233.3' cy='27.3' r='1' fill='#7fa8d0'/>
 <!-- palette -->
 <path d='M2287.5 18 C2280 18 2276.5 23 2276.5 27.5 C2276.5 32 2278.5 33.5 2281 33 C2283.5 32.5 2284 33.5 2284 35 C2284 36.5 2285.5 37.5 2287.5 37.5 C2294 37.5 2299 33 2299 27.5 C2299 22 2294.5 18 2287.5 18 Z' fill='none' stroke='#5a4a52' stroke-width='2'/>
 <circle cx='2288' cy='31' r='1.8' fill='#5a4a52'/>
 <circle cx='2281.5' cy='25' r='1' fill='#5a4a52'/><circle cx='2285' cy='21.5' r='1' fill='#5a4a52'/><circle cx='2290' cy='21' r='1' fill='#5a4a52'/><circle cx='2294.5' cy='23.5' r='1' fill='#5a4a52'/><circle cx='2296.5' cy='28' r='1' fill='#5a4a52'/>
 <!-- puzzle -->
 <path d='M2334 17.5 H2350 A1.8 1.8 0 0 1 2351.8 19.3 V25 A2.6 2.6 0 0 1 2351.8 30 V35.7 A1.8 1.8 0 0 1 2350 37.5 H2334 A1.8 1.8 0 0 1 2332.2 35.7 V30.3 A2.8 2.8 0 0 0 2332.2 24.7 V19.3 A1.8 1.8 0 0 1 2334 17.5 Z' fill='none' stroke='#0d2a2a' stroke-width='2.5' stroke-linejoin='round'/>
 <path d='M2339.5 17 A2.6 2.6 0 0 1 2344.7 17 Z' fill='#0d2a2a'/>
 <path d='M2352 24.9 A2.6 2.6 0 0 1 2352 30.1 Z' fill='#0d2a2a'/>
 <rect x='2381' y='16' width='2' height='23' rx='1' fill='#b5dbdb'/>
 <!-- download -->
 <path d='M2420 17 V33 M2412.5 26 L2420 33.5 L2427.5 26 M2409.5 31 V38.5 H2430.5 V31' fill='none' stroke='#0d2a2a' stroke-width='2.8'/>
 <!-- avatar -->
 <defs><linearGradient id='av' x1='0' y1='0' x2='0' y2='1'><stop offset='0' stop-color='#33507e'/><stop offset='0.3' stop-color='#6a6a8a'/><stop offset='0.42' stop-color='#d88060'/><stop offset='0.55' stop-color='#7a5a78'/><stop offset='0.75' stop-color='#b890a8'/><stop offset='1' stop-color='#e6b8c8'/></linearGradient></defs>
 <circle cx='2473.9' cy='27.75' r='15.2' fill='url(#av)'/>
 <circle cx='2528' cy='19.7' r='2.3' fill='#0d2a2a'/><circle cx='2528' cy='28' r='2.3' fill='#0d2a2a'/><circle cx='2528' cy='36.2' r='2.3' fill='#0d2a2a'/>
 <!-- bookmarks bar -->
 <g fill='none' stroke='#0d2a2a' stroke-width='2.4'>
  <rect x='29.5' y='73.5' width='7.5' height='7.5'/><rect x='41.5' y='73.5' width='7.5' height='7.5'/>
  <rect x='29.5' y='85.5' width='7.5' height='7.5'/><rect x='41.5' y='85.5' width='7.5' height='7.5'/>
 </g>
 <rect x='72' y='72' width='2' height='23' rx='1' fill='#b5dbdb'/>
 <rect x='2405' y='71' width='2' height='24' rx='1' fill='#b5dbdb'/>
 <path d='M2432 75 H2440 L2443 78 H2454 V91.5 H2432 Z' fill='none' stroke='#4c6262' stroke-width='2' stroke-linejoin='round'/>
</svg>
<div class='t' style='left:222px;top:19px;font-size:19px;color:#111'><svg width='57.00' height='19' viewBox='0 0 3000 1000' style='vertical-align:baseline;margin-bottom:-2.28px;overflow:visible' fill='#111'><use href='#gr4e0d' x='0'/><use href='#gr5b89' x='1000'/><use href='#gr5168' x='2000'/></svg></div>
<div class='t' style='left:440px;top:16px;font-size:22px;color:#3a4545;letter-spacing:0.45px'>:28002/grafana/d/hbase/hbase?orgId=1</div>
<div class='t' style='left:2467px;top:75px;font-size:18.5px;color:#111'><svg width='74.00' height='18.5' viewBox='0 0 4000 1000' style='vertical-align:baseline;margin-bottom:-2.22px;overflow:visible' fill='#111'><use href='#gr6240' x='0'/><use href='#gr6709' x='1000'/><use href='#gr4e66' x='2000'/><use href='#gr7b7e' x='3000'/></svg></div>
<svg class='a' style='left:0;top:0' width='2560' height='114'><rect x='298' y='15' width='7' height='9' fill='#dfe3e2'/><rect x='305' y='15' width='9' height='9' fill='#768389'/><rect x='314' y='15' width='9' height='9' fill='#8f9292'/><rect x='332' y='15' width='9' height='9' fill='#979998'/><rect x='341' y='15' width='9' height='9' fill='#7a8489'/><rect x='350' y='15' width='9' height='9' fill='#adbbc2'/><rect x='368' y='15' width='9' height='9' fill='#939896'/><rect x='377' y='15' width='9' height='9' fill='#9eabb1'/><rect x='386' y='15' width='9' height='9' fill='#969ea1'/><rect x='404' y='15' width='9' height='9' fill='#808d93'/><rect x='413' y='15' width='9' height='9' fill='#7b848c'/><rect x='422' y='15' width='9' height='9' fill='#dde1df'/><rect x='431' y='15' width='9' height='9' fill='#d0dde2'/><rect x='298' y='24' width='7' height='8.8' fill='#a89e91'/><rect x='305' y='24' width='9' height='8.8' fill='#c0d6e0'/><rect x='314' y='24' width='9' height='8.8' fill='#d0e0e0'/><rect x='332' y='24' width='9' height='8.8' fill='#898a85'/><rect x='341' y='24' width='9' height='8.8' fill='#a09e98'/><rect x='350' y='24' width='9' height='8.8' fill='#8c9ea6'/><rect x='377' y='24' width='9' height='8.8' fill='#828a8b'/><rect x='386' y='24' width='9' height='8.8' fill='#6f7479'/><rect x='404' y='24' width='9' height='8.8' fill='#aab5b9'/><rect x='413' y='24' width='9' height='8.8' fill='#8a9093'/><rect x='422' y='24' width='9' height='8.8' fill='#b7bab6'/><rect x='431' y='24' width='9' height='8.8' fill='#8a9ea6'/><rect x='314' y='32.8' width='9' height='5' fill='#b3b5b1'/><rect x='323' y='32.8' width='9' height='5' fill='#a8acab'/><rect x='332' y='32.8' width='9' height='5' fill='#cbd8dd'/><rect x='341' y='32.8' width='9' height='5' fill='#959a9a'/><rect x='350' y='32.8' width='9' height='5' fill='#9ca3aa'/><rect x='368' y='32.8' width='9' height='5' fill='#c3c8c6'/><rect x='404' y='32.8' width='9' height='5' fill='#8e9ba3'/><rect x='431' y='32.8' width='9' height='5' fill='#d4dad6'/><rect x='99.0' y='68' width='9' height='9' fill='#f0f6f6'/><rect x='99.0' y='77' width='9' height='9' fill='#eef6f6'/><rect x='108.0' y='77' width='9' height='9' fill='#b89ff0'/><rect x='126.0' y='77' width='9' height='9' fill='#9fb0b0'/><rect x='135.0' y='77' width='9' height='9' fill='#b8c8c8'/><rect x='144.0' y='77' width='9' height='9' fill='#cddada'/><rect x='153.0' y='77' width='9' height='9' fill='#a8bcbc'/><rect x='162.0' y='77' width='9' height='9' fill='#aebcbc'/><rect x='171.0' y='77' width='9' height='9' fill='#7f9898'/><rect x='180.0' y='77' width='9' height='9' fill='#a0b6b6'/><rect x='189.0' y='77' width='9' height='9' fill='#869e9a'/><rect x='198.0' y='77' width='9' height='9' fill='#a7b3ae'/><rect x='207.0' y='77' width='9' height='9' fill='#7d9b9b'/><rect x='216.0' y='77' width='9' height='9' fill='#a8bec0'/><rect x='99.0' y='86' width='9' height='9' fill='#7f95f0'/><rect x='135.0' y='86' width='9' height='9' fill='#c5c5b5'/><rect x='144.0' y='86' width='9' height='9' fill='#cddada'/><rect x='162.0' y='86' width='9' height='9' fill='#cddada'/><rect x='171.0' y='86' width='9' height='9' fill='#6e9696'/><rect x='180.0' y='86' width='9' height='9' fill='#a8bcbc'/><rect x='189.0' y='86' width='9' height='9' fill='#d5e0e0'/><rect x='198.0' y='86' width='9' height='9' fill='#e6f0f0'/><rect x='207.0' y='86' width='9' height='9' fill='#869e9e'/><rect x='243.0' y='68' width='9' height='9' fill='#5f6262'/><rect x='252.0' y='68' width='9' height='9' fill='#e8f0f0'/><rect x='270.0' y='68' width='9' height='9' fill='#f0f8f4'/><rect x='243.0' y='77' width='9' height='9' fill='#606262'/><rect x='252.0' y='77' width='9' height='9' fill='#7f8080'/><rect x='261.0' y='77' width='9' height='9' fill='#cfd5d5'/><rect x='270.0' y='77' width='9' height='9' fill='#c8d0c8'/><rect x='287.5' y='77' width='9' height='9' fill='#b8c6c6'/><rect x='296.5' y='77' width='9' height='9' fill='#b8c6c6'/><rect x='305.5' y='77' width='9' height='9' fill='#c0cccc'/><rect x='314.5' y='77' width='9' height='9' fill='#f0f8f6'/><rect x='323.5' y='77' width='9' height='9' fill='#a3adad'/><rect x='332.5' y='77' width='9' height='9' fill='#9fb6bc'/><rect x='341.5' y='77' width='9' height='9' fill='#a8b8b6'/><rect x='243.0' y='86' width='9' height='9' fill='#2a2a2a'/><rect x='252.0' y='86' width='9' height='9' fill='#7a7a7a'/><rect x='261.0' y='86' width='9' height='9' fill='#636868'/><rect x='270.0' y='86' width='9' height='9' fill='#eef4ec'/><rect x='279.0' y='86' width='9' height='9' fill='#b8d0d8'/><rect x='288.0' y='86' width='9' height='9' fill='#b4d0d8'/><rect x='297.0' y='86' width='9' height='9' fill='#9fb2b6'/><rect x='306.0' y='86' width='9' height='9' fill='#b4c8cc'/><rect x='315.0' y='86' width='9' height='9' fill='#b4ccd4'/><rect x='324.0' y='86' width='9' height='9' fill='#ccd6d6'/><rect x='342.0' y='86' width='9' height='9' fill='#f4f8ec'/><rect x='368.5' y='68' width='9' height='9' fill='#cfd5d5'/><rect x='386.5' y='68' width='9' height='9' fill='#0d1a28'/><rect x='395.5' y='68' width='9' height='9' fill='#838a8a'/><rect x='404.5' y='68' width='9' height='9' fill='#eef6f2'/><rect x='413.5' y='68' width='9' height='9' fill='#e0eaea'/><rect x='440.5' y='68' width='9' height='9' fill='#e0eaea'/><rect x='377.5' y='77' width='9' height='9' fill='#0a0a0a'/><rect x='386.5' y='77' width='9' height='9' fill='#0a0a0a'/><rect x='404.5' y='77' width='9' height='9' fill='#eeeadb'/><rect x='413.5' y='77' width='9' height='9' fill='#d0dcdc'/><rect x='422.5' y='77' width='9' height='9' fill='#b6c6c6'/><rect x='431.5' y='77' width='9' height='9' fill='#a9bcbc'/><rect x='440.5' y='77' width='9' height='9' fill='#c6d2d2'/><rect x='449.5' y='77' width='9' height='9' fill='#dde4d8'/><rect x='458.5' y='77' width='9' height='9' fill='#c2d6da'/><rect x='476.5' y='77' width='9' height='9' fill='#e0f8fc'/><rect x='368.5' y='86' width='9' height='9' fill='#848888'/><rect x='377.5' y='86' width='9' height='9' fill='#656868'/><rect x='386.5' y='86' width='9' height='9' fill='#6e7272'/><rect x='395.5' y='86' width='9' height='9' fill='#9a9e9e'/><rect x='404.5' y='86' width='9' height='9' fill='#d0dcdc'/><rect x='413.5' y='86' width='9' height='9' fill='#a0b4a0'/><rect x='422.5' y='86' width='9' height='9' fill='#b0c0c8'/><rect x='431.5' y='86' width='9' height='9' fill='#a0b2b2'/><rect x='440.5' y='86' width='9' height='9' fill='#e2eeee'/><rect x='449.5' y='86' width='9' height='9' fill='#c8d4d0'/><rect x='458.5' y='86' width='9' height='9' fill='#d0dede'/><rect x='467.5' y='86' width='9' height='9' fill='#dde8ec'/><rect x='476.5' y='86' width='9' height='9' fill='#ccd8d8'/><rect x='503.0' y='68' width='9' height='9' fill='#eef4fc'/><rect x='512.0' y='68' width='9' height='9' fill='#7b6ef0'/><rect x='503.0' y='77' width='9' height='9' fill='#c0bcf8'/><rect x='512.0' y='77' width='9' height='9' fill='#b4a4f0'/><rect x='521.0' y='77' width='9' height='9' fill='#c8c8fc'/><rect x='539.0' y='77' width='9' height='9' fill='#a7b7b7'/><rect x='548.0' y='77' width='9' height='9' fill='#b0bfbc'/><rect x='557.0' y='77' width='9' height='9' fill='#e6f0f0'/><rect x='566.0' y='77' width='9' height='9' fill='#a2bcba'/><rect x='503.0' y='86' width='9' height='9' fill='#c6c6f8'/><rect x='512.0' y='86' width='9' height='9' fill='#d8c8f8'/><rect x='539.0' y='86' width='9' height='9' fill='#dde4dc'/><rect x='548.0' y='86' width='9' height='9' fill='#d4e0dc'/><rect x='557.0' y='86' width='9' height='9' fill='#8a9a8c'/><rect x='566.0' y='86' width='9' height='9' fill='#b4c6c8'/><rect x='584.0' y='86' width='9' height='9' fill='#d6eefa'/><rect x='620.0' y='68' width='9' height='9' fill='#d0d8d8'/><rect x='629.0' y='68' width='9' height='9' fill='#dcd8c4'/><rect x='611.0' y='77' width='9' height='9' fill='#636868'/><rect x='620.0' y='77' width='9' height='9' fill='#b4baba'/><rect x='629.0' y='77' width='9' height='9' fill='#e6d8b8'/><rect x='647.0' y='68' width='9' height='9' fill='#b0c0c0'/><rect x='647.0' y='77' width='9' height='9' fill='#aebcbc'/><rect x='656.0' y='77' width='9' height='9' fill='#9fb4b4'/><rect x='665.0' y='77' width='9' height='9' fill='#c6d2d2'/><rect x='674.0' y='77' width='9' height='9' fill='#a6b8bc'/><rect x='647.0' y='86' width='9' height='9' fill='#b0c0c0'/><rect x='656.0' y='86' width='9' height='9' fill='#a6b6b6'/><rect x='665.0' y='86' width='9' height='9' fill='#b4c6c6'/><rect x='674.0' y='86' width='9' height='9' fill='#a8c0c8'/><rect x='620.0' y='86' width='9' height='9' fill='#8c7a5c'/><rect x='710.0' y='77' width='9.0' height='9' fill='#f0f6f6'/><rect x='710.0' y='86' width='9.0' height='9' fill='#6a96e0'/><rect x='719.0' y='77' width='9.0' height='9' fill='#4aa0e0'/><rect x='719.0' y='86' width='9.0' height='9' fill='#a8d0f0'/><rect x='728.0' y='77' width='9.0' height='9' fill='#eef8fa'/><rect x='737.0' y='77' width='9.0' height='9' fill='#9fb6ba'/><rect x='746.0' y='77' width='9.0' height='9' fill='#c8d8dc'/><rect x='746.0' y='86' width='9.0' height='9' fill='#c8dadc'/><rect x='755.0' y='77' width='9.0' height='9' fill='#abc0c0'/><rect x='764.0' y='77' width='9.0' height='9' fill='#9fb2ae'/><rect x='764.0' y='86' width='9.0' height='9' fill='#dde8e8'/><rect x='773.0' y='86' width='9.0' height='9' fill='#b8d4dc'/><rect x='782.0' y='77' width='9.0' height='9' fill='#9aaeaa'/><rect x='782.0' y='86' width='9.0' height='9' fill='#9db2b0'/><rect x='791.0' y='68' width='9.0' height='9' fill='#e2eeee'/><rect x='791.0' y='77' width='9.0' height='9' fill='#d6e2e2'/><rect x='791.0' y='86' width='9.0' height='9' fill='#aac0c0'/><rect x='800.0' y='77' width='9.0' height='9' fill='#e8f8fc'/><rect x='826.0' y='68' width='9.0' height='9' fill='#acb8b8'/><rect x='826.0' y='77' width='9.0' height='9' fill='#8c9494'/><rect x='826.0' y='86' width='9.0' height='9' fill='#6e7474'/><rect x='835.0' y='68' width='9.0' height='9' fill='#f0f8f8'/><rect x='835.0' y='77' width='9.0' height='9' fill='#8c9494'/><rect x='835.0' y='86' width='9.0' height='9' fill='#c4d0d0'/><rect x='844.0' y='68' width='9.0' height='9' fill='#e6f0f0'/><rect x='844.0' y='86' width='9.0' height='9' fill='#f0f8f8'/><rect x='853.0' y='77' width='9.0' height='9' fill='#f4fcf4'/><rect x='862.0' y='86' width='9.0' height='9' fill='#a0b8a4'/><rect x='871.0' y='77' width='9.0' height='9' fill='#c8d2ce'/><rect x='880.0' y='77' width='9.0' height='9' fill='#b8ccd0'/><rect x='880.0' y='86' width='9.0' height='9' fill='#b4c8cc'/><rect x='889.0' y='77' width='9.0' height='9' fill='#82a4b0'/><rect x='889.0' y='86' width='9.0' height='9' fill='#88a8b0'/><rect x='898.0' y='86' width='9.0' height='9' fill='#c4d8dc'/><rect x='925.0' y='68' width='9.0' height='9' fill='#e6eaea'/><rect x='925.0' y='77' width='9.0' height='9' fill='#d2d2d2'/><rect x='925.0' y='86' width='9.0' height='9' fill='#dedede'/><rect x='934.0' y='68' width='9.0' height='9' fill='#f8f8f8'/><rect x='934.0' y='77' width='9.0' height='9' fill='#d0d0d0'/><rect x='934.0' y='86' width='9.0' height='9' fill='#606060'/><rect x='943.0' y='68' width='9.0' height='9' fill='#f0f0f0'/><rect x='943.0' y='77' width='9.0' height='9' fill='#e6eaea'/><rect x='943.0' y='86' width='9.0' height='9' fill='#e0e4e4'/><rect x='961.0' y='77' width='9.0' height='9' fill='#90aaaa'/><rect x='961.0' y='86' width='9.0' height='9' fill='#e6f0e0'/><rect x='970.0' y='77' width='9.0' height='9' fill='#d6e2de'/><rect x='979.0' y='77' width='9.0' height='9' fill='#92aaa4'/><rect x='979.0' y='86' width='9.0' height='9' fill='#c8d8d8'/><rect x='988.0' y='77' width='9.0' height='9' fill='#eef6f8'/><rect x='997.0' y='86' width='9.0' height='9' fill='#e6f4f8'/><rect x='1024.0' y='77' width='9.0' height='9' fill='#b0c4c4'/><rect x='1033.0' y='86' width='9.0' height='9' fill='#b0c4c4'/><rect x='1042.0' y='68' width='9.0' height='9' fill='#f0f8f8'/><rect x='1042.0' y='77' width='9.0' height='9' fill='#a8bcbc'/><rect x='1042.0' y='86' width='9.0' height='9' fill='#a8bcbc'/><rect x='1051.0' y='77' width='9.0' height='9' fill='#a8bcbc'/><rect x='1060.0' y='77' width='9.0' height='9' fill='#f0fcf0'/><rect x='1069.0' y='77' width='9.0' height='9' fill='#406a6c'/><rect x='1069.0' y='86' width='9.0' height='9' fill='#d0e0e0'/><rect x='1078.0' y='77' width='9.0' height='9' fill='#b0c8cc'/><rect x='1078.0' y='86' width='9.0' height='9' fill='#b0c8cc'/><rect x='1087.0' y='77' width='9.0' height='9' fill='#4e7878'/><rect x='1087.0' y='86' width='9.0' height='9' fill='#d0e0e0'/><rect x='1123.0' y='77' width='9.0' height='9' fill='#a8bcbc'/><rect x='1132.0' y='86' width='9.0' height='9' fill='#f0fafa'/><rect x='1141.0' y='77' width='9.0' height='9' fill='#eef6f6'/><rect x='1141.0' y='86' width='9.0' height='9' fill='#eef6f6'/><rect x='1150.0' y='77' width='9.0' height='9' fill='#b4c6c4'/><rect x='1159.0' y='86' width='9.0' height='9' fill='#ccd8cc'/><rect x='1168.0' y='77' width='9.0' height='9' fill='#b8c8c0'/><rect x='1168.0' y='86' width='9.0' height='9' fill='#d8e8e4'/><rect x='1177.0' y='77' width='9.0' height='9' fill='#f4fcf0'/><rect x='1177.0' y='86' width='9.0' height='9' fill='#d0e4f0'/><rect x='1186.0' y='77' width='9.0' height='9' fill='#8ea8a8'/><rect x='1186.0' y='86' width='9.0' height='9' fill='#d0e4f0'/><rect x='1195.0' y='77' width='9.0' height='9' fill='#e8f8fc'/><rect x='1195.0' y='86' width='9.0' height='9' fill='#d0e8f4'/><rect x='1204.0' y='77' width='9.0' height='9' fill='#b0c8cc'/><rect x='1213.0' y='77' width='9.0' height='9' fill='#d8ece8'/><rect x='1213.0' y='86' width='9.0' height='9' fill='#e0ecec'/><rect x='1222.0' y='77' width='9.0' height='9' fill='#9ab4b4'/><rect x='1222.0' y='86' width='9.0' height='9' fill='#c8e4f4'/><rect x='1249.0' y='68' width='9.0' height='9' fill='#acbcbc'/><rect x='1249.0' y='86' width='9.0' height='9' fill='#a0b4b4'/><rect x='1267.0' y='77' width='9.0' height='9' fill='#eef6f6'/><rect x='1267.0' y='86' width='9.0' height='9' fill='#a8bcbc'/><rect x='1284.0' y='77' width='9.0' height='9' fill='#d8dcd0'/><rect x='1293.0' y='86' width='9.0' height='9' fill='#98b0b0'/><rect x='1293.0' y='95' width='9.0' height='9' fill='#b8cccc'/><rect x='1338.0' y='68' width='9.0' height='9' fill='#a4b4b4'/><rect x='1338.0' y='77' width='9.0' height='9' fill='#a4b4b4'/><rect x='1338.0' y='86' width='9.0' height='9' fill='#a8bcbc'/><rect x='1347.0' y='77' width='9.0' height='9' fill='#abbcbc'/><rect x='1347.0' y='86' width='9.0' height='9' fill='#abbcbc'/><rect x='1356.0' y='77' width='9.0' height='9' fill='#d8e4e4'/><rect x='1356.0' y='86' width='9.0' height='9' fill='#d8e4e4'/><rect x='1374.0' y='86' width='9.0' height='9' fill='#d8e4e4'/><rect x='1383.0' y='77' width='9.0' height='9' fill='#9fb4b0'/><rect x='1383.0' y='86' width='9.0' height='9' fill='#9fb4b0'/><rect x='1392.0' y='68' width='9.0' height='9' fill='#d8eaec'/><rect x='1392.0' y='77' width='9.0' height='9' fill='#7898a0'/><rect x='1392.0' y='86' width='9.0' height='9' fill='#f0fafa'/><rect x='1401.0' y='77' width='9.0' height='9' fill='#c0d2d0'/><rect x='1401.0' y='86' width='9.0' height='9' fill='#eef4ec'/><rect x='1410.0' y='77' width='9.0' height='9' fill='#d0e8f4'/><rect x='1437.0' y='68' width='9.0' height='9' fill='#a8bcbc'/><rect x='1437.0' y='77' width='9.0' height='9' fill='#a8bcbc'/><rect x='1446.0' y='86' width='9.0' height='9' fill='#a8bcbc'/><rect x='1455.0' y='77' width='9.0' height='9' fill='#a8bcbc'/><rect x='1455.0' y='86' width='9.0' height='9' fill='#d8e4e4'/><rect x='1473.0' y='77' width='9.0' height='9' fill='#94aaa8'/><rect x='1473.0' y='86' width='9.0' height='9' fill='#c4d2cc'/><rect x='1482.0' y='68' width='9.0' height='9' fill='#d0e0e0'/><rect x='1482.0' y='77' width='9.0' height='9' fill='#94aaa8'/><rect x='1491.0' y='77' width='9.0' height='9' fill='#e0f0f0'/><rect x='1491.0' y='86' width='9.0' height='9' fill='#d0e0dc'/><rect x='1500.0' y='68' width='9.0' height='9' fill='#c4d6d6'/><rect x='1500.0' y='77' width='9.0' height='9' fill='#c4d6d6'/><rect x='1500.0' y='86' width='9.0' height='9' fill='#acc0c0'/><rect x='1527.0' y='86' width='9.0' height='9' fill='#dce8e4'/><rect x='1536.0' y='68' width='9.0' height='9' fill='#a8bcbc'/><rect x='1536.0' y='86' width='9.0' height='9' fill='#e8f4f4'/><rect x='1545.0' y='77' width='9.0' height='9' fill='#b4c8c8'/><rect x='1545.0' y='86' width='9.0' height='9' fill='#a8bcbc'/><rect x='1554.0' y='77' width='9.0' height='9' fill='#b4c8c8'/><rect x='1554.0' y='86' width='9.0' height='9' fill='#94aaa8'/><rect x='1572.0' y='77' width='9.0' height='9' fill='#88a4a8'/><rect x='1572.0' y='86' width='9.0' height='9' fill='#90a8a4'/><rect x='1581.0' y='68' width='9.0' height='9' fill='#dce8e8'/><rect x='1581.0' y='77' width='9.0' height='9' fill='#88a4a8'/><rect x='1581.0' y='86' width='9.0' height='9' fill='#eef6ea'/><rect x='1590.0' y='77' width='9.0' height='9' fill='#c4e0e8'/><rect x='1590.0' y='86' width='9.0' height='9' fill='#a0b4a0'/><rect x='1599.0' y='68' width='9.0' height='9' fill='#d0dcdc'/><rect x='1599.0' y='77' width='9.0' height='9' fill='#7aa0ac'/><rect x='1599.0' y='86' width='9.0' height='9' fill='#c8d8d4'/><rect x='1608.0' y='77' width='9.0' height='9' fill='#a0b0b0'/><rect x='1608.0' y='86' width='9.0' height='9' fill='#e8f4ec'/><rect x='1617.0' y='77' width='9.0' height='9' fill='#88a4a4'/><rect x='1617.0' y='86' width='9.0' height='9' fill='#88a4a4'/><rect x='1653.0' y='77' width='9.0' height='9' fill='#b0c4c4'/><rect x='1662.0' y='86' width='9.0' height='9' fill='#b0c4c4'/><rect x='1671.0' y='68' width='9.0' height='9' fill='#e0eaea'/><rect x='1671.0' y='77' width='9.0' height='9' fill='#a8bcbc'/><rect x='1671.0' y='86' width='9.0' height='9' fill='#eef6f6'/><rect x='1689.0' y='77' width='9.0' height='9' fill='#b0c8d0'/><rect x='1698.0' y='77' width='9.0' height='9' fill='#b4b4b4'/><rect x='1707.0' y='77' width='9.0' height='9' fill='#c4d8dc'/><rect x='1716.0' y='77' width='9.0' height='9' fill='#a8bcbc'/><rect x='1716.0' y='86' width='9.0' height='9' fill='#98aa98'/><rect x='1725.0' y='77' width='9.0' height='9' fill='#c4d8dc'/><rect x='1725.0' y='86' width='9.0' height='9' fill='#a0b8bc'/><rect x='1752.0' y='77' width='9.0' height='9' fill='#d8e4e4'/><rect x='1761.0' y='77' width='9.0' height='9' fill='#eef6f6'/><rect x='1761.0' y='86' width='9.0' height='9' fill='#eef6f6'/><rect x='1770.0' y='77' width='9.0' height='9' fill='#eef6f6'/><rect x='1770.0' y='86' width='9.0' height='9' fill='#d8e4e4'/><rect x='1788.0' y='86' width='9.0' height='9' fill='#c4d4d4'/><rect x='1797.0' y='77' width='9.0' height='9' fill='#b8ccd0'/><rect x='1797.0' y='86' width='9.0' height='9' fill='#a8bcbc'/><rect x='1806.0' y='86' width='9.0' height='9' fill='#f0faf0'/><rect x='1815.0' y='77' width='9.0' height='9' fill='#90a8a4'/><rect x='1815.0' y='86' width='9.0' height='9' fill='#d0ecf8'/><rect x='1824.0' y='77' width='9.0' height='9' fill='#e0f0f4'/><rect x='1824.0' y='86' width='9.0' height='9' fill='#d4e4ec'/><rect x='1851.0' y='86' width='9.0' height='9' fill='#eef6f6'/><rect x='1860.0' y='68' width='9.0' height='9' fill='#a8bcbc'/><rect x='1860.0' y='86' width='9.0' height='9' fill='#d8e4e4'/><rect x='1869.0' y='77' width='9.0' height='9' fill='#a8bcbc'/><rect x='1869.0' y='86' width='9.0' height='9' fill='#d8e4e4'/><rect x='1896.0' y='77' width='9.0' height='9' fill='#607c7c'/><rect x='1896.0' y='86' width='9.0' height='9' fill='#d0e0e4'/><rect x='1905.0' y='77' width='9.0' height='9' fill='#a8c0cc'/><rect x='1905.0' y='86' width='9.0' height='9' fill='#a8bcc0'/><rect x='1914.0' y='77' width='9.0' height='9' fill='#90aaa8'/><rect x='1914.0' y='86' width='9.0' height='9' fill='#c0d4d8'/><rect x='1948.9' y='68' width='9.0' height='9' fill='#abbebe'/><rect x='1948.9' y='77' width='9.0' height='9' fill='#a8bcbc'/><rect x='1948.9' y='86' width='9.0' height='9' fill='#eef4f4'/><rect x='1957.8' y='68' width='9.0' height='9' fill='#a8bcbc'/><rect x='1957.8' y='86' width='9.0' height='9' fill='#d8e4e4'/><rect x='1966.7' y='86' width='9.0' height='9' fill='#d8e4e4'/><rect x='1975.9' y='68' width='9.0' height='9' fill='#d8e4e4'/><rect x='1975.9' y='77' width='9.0' height='9' fill='#a0b4b4'/><rect x='1985.0' y='68' width='9.0' height='9' fill='#e0eae6'/><rect x='1985.0' y='86' width='9.0' height='9' fill='#b4c8cc'/><rect x='1994.0' y='68' width='9.0' height='9' fill='#b4c8cc'/><rect x='1994.0' y='77' width='9.0' height='9' fill='#869a94'/><rect x='1994.0' y='86' width='9.0' height='9' fill='#c8dcdc'/><rect x='2002.9' y='68' width='9.0' height='9' fill='#c8dce0'/><rect x='2002.9' y='77' width='9.0' height='9' fill='#98a8ac'/><rect x='2002.9' y='86' width='9.0' height='9' fill='#eefafc'/><rect x='2012.0' y='77' width='9.0' height='9' fill='#98aca8'/><rect x='2012.0' y='86' width='9.0' height='9' fill='#d8e4dc'/><rect x='2021.0' y='77' width='9.0' height='9' fill='#98aca8'/><rect x='2021.0' y='86' width='9.0' height='9' fill='#d4dccc'/><rect x='2030.0' y='77' width='9.0' height='9' fill='#90a8a4'/><rect x='2030.0' y='86' width='9.0' height='9' fill='#c0ccc4'/><rect x='2039.0' y='77' width='9.0' height='9' fill='#c8dce0'/><rect x='2039.0' y='86' width='9.0' height='9' fill='#b0c4c4'/><rect x='2066.0' y='77' width='9.0' height='9' fill='#a8bcbc'/><rect x='2066.0' y='86' width='9.0' height='9' fill='#b0c4c4'/><rect x='2074.9' y='68' width='9.0' height='9' fill='#e6f0f0'/><rect x='2074.9' y='77' width='9.0' height='9' fill='#e0ecec'/><rect x='2084.0' y='77' width='9.0' height='9' fill='#a8bcbc'/><rect x='2084.0' y='86' width='9.0' height='9' fill='#d4e4e4'/><rect x='2092.9' y='86' width='9.0' height='9' fill='#d4e4e4'/><rect x='2101.9' y='86' width='9.0' height='9' fill='#94acb0'/><rect x='2111.0' y='77' width='9.0' height='9' fill='#84a0a0'/><rect x='2111.0' y='86' width='9.0' height='9' fill='#a8bcbc'/><rect x='2119.9' y='77' width='9.0' height='9' fill='#b0b4b0'/><rect x='2119.9' y='86' width='9.0' height='9' fill='#a8b8b4'/><rect x='2129.0' y='68' width='9.0' height='9' fill='#d0dcdc'/><rect x='2129.0' y='77' width='9.0' height='9' fill='#9cb0b0'/><rect x='2129.0' y='86' width='9.0' height='9' fill='#9cb0a8'/><rect x='2137.9' y='77' width='9.0' height='9' fill='#b8d0d8'/><rect x='2137.9' y='86' width='9.0' height='9' fill='#c8d8d8'/><rect x='2146.9' y='68' width='9.0' height='9' fill='#d0e8f0'/><rect x='2146.9' y='77' width='9.0' height='9' fill='#90aaa8'/><rect x='2146.9' y='86' width='9.0' height='9' fill='#84a0a4'/><rect x='2156.0' y='77' width='9.0' height='9' fill='#9cb0a8'/><rect x='2156.0' y='86' width='9.0' height='9' fill='#b4ccd0'/><rect x='2183.0' y='77' width='9.0' height='9' fill='#a8bcbc'/><rect x='2191.9' y='68' width='9.0' height='9' fill='#eef6f6'/><rect x='2191.9' y='86' width='9.0' height='9' fill='#a8bcbc'/><rect x='2200.9' y='77' width='9.0' height='9' fill='#a8bcbc'/><rect x='2200.9' y='86' width='9.0' height='9' fill='#a8bcbc'/><rect x='2219.1' y='77' width='9.0' height='9' fill='#c8d4d4'/><rect x='2228.0' y='77' width='9.0' height='9' fill='#c8d4d4'/><rect x='2245.8' y='77' width='9.0' height='9' fill='#7a9490'/><rect x='2245.8' y='86' width='9.0' height='9' fill='#d8e8ec'/><rect x='2254.8' y='77' width='9.0' height='9' fill='#b8cccc'/><rect x='2254.8' y='86' width='9.0' height='9' fill='#7c9ca0'/><rect x='2263.9' y='77' width='9.0' height='9' fill='#94acb0'/><rect x='2263.9' y='86' width='9.0' height='9' fill='#c4d4d4'/><rect x='2272.8' y='86' width='9.0' height='9' fill='#8ca8a8'/></svg>
<div class='a' style='left:0;top:115px;width:2560px;height:60px;background:#fff;border-bottom:1px solid #e4e5e6'></div>
<div class='a' style='left:0;top:175px;width:2560px;height:61px;background:#fff;border-bottom:1px solid #e4e5e6;box-shadow:0 1px 4px rgba(0,0,0,0.04)'></div>

<svg class='a' style='left:0;top:114px' width='2560' height='121' viewBox='0 114 2560 121'>
 <path d='M47.5 127.2 C40 130.5 31 137.5 27.9 146.1 C31.5 144 36 142.8 40.6 142.5 C42 136 44 131 47.5 127.2 Z' fill='#054ca6'/>
 <path d='M55.4 143.4 C53 152 45 159 35.5 162.5 C39 158 41 153 43.4 146.8 C47 145.5 51 145.5 55.4 143.4 Z' fill='#054ca6'/>
 <rect x='974.5' y='121.5' width='624' height='47' rx='2' fill='#fff' stroke='#c4c6c8' stroke-width='1'/>
 <circle cx='996.5' cy='143.5' r='8' fill='none' stroke='#4a4d52' stroke-width='2.2'/>
 <path d='M1002.3 149.3 L1007.5 154.5' stroke='#4a4d52' stroke-width='2.2' stroke-linecap='round'/>
 <rect x='1509' y='138.5' width='20.5' height='13.5' rx='2' fill='none' stroke='#4a4d52' stroke-width='2'/>
 <path d='M1512.5 142.5 h2 M1516.5 142.5 h2 M1520.5 142.5 h2 M1524.5 142.5 h2 M1512.5 145.5 h2 M1516.5 145.5 h2 M1520.5 145.5 h2 M1524.5 145.5 h2 M1514 148.5 h11' stroke='#4a4d52' stroke-width='1.5'/>
 <path d='M2323.5 136 V153 M2315 144.5 H2332' stroke='#4a4d52' stroke-width='2.2' stroke-linecap='round'/>
 <path d='M2344.5 142.5 L2349.2 147.2 L2354 142.5' fill='none' stroke='#4a4d52' stroke-width='2' stroke-linecap='round' stroke-linejoin='round'/>
 <rect x='2380' y='127' width='1' height='36' fill='#c9cbcd'/>
 <circle cx='2413.5' cy='144.6' r='10' fill='none' stroke='#4a4d52' stroke-width='2.2'/>
 <path d='M2409.7 141.5 C2409.7 136.5 2417.5 136.5 2417.5 141.3 C2417.5 144.3 2413.6 144.3 2413.6 147.2' fill='none' stroke='#4a4d52' stroke-width='2.1' stroke-linecap='round'/>
 <circle cx='2413.6' cy='150.3' r='1.2' fill='#4a4d52'/>
 <circle cx='2464.5' cy='152' r='2.6' fill='none' stroke='#4a4d52' stroke-width='2'/>
 <path d='M2464 146.5 A9 9 0 0 1 2471 153.5 M2464 141 A14 14 0 0 1 2476.5 153.5 M2464 135.7 A19.5 19.5 0 0 1 2481 153.5' fill='none' stroke='#4a4d52' stroke-width='2.2' stroke-linecap='round'/>
 <defs><clipPath id='avc'><circle cx='2527' cy='144.6' r='17.8'/></clipPath></defs>
 <circle cx='2527' cy='144.6' r='17.8' fill='#c4c4c4'/>
 <g clip-path='url(#avc)' fill='#fff'>
  <circle cx='2527' cy='140' r='7.8'/>
  <ellipse cx='2527' cy='165' rx='13.5' ry='12'/>
 </g>
 <!-- hamburger -->
 <rect x='27' y='196' width='30' height='3' rx='1.5' fill='#24292e'/>
 <rect x='27' y='203.5' width='30' height='3' rx='1.5' fill='#24292e'/>
 <rect x='27' y='211' width='30' height='3' rx='1.5' fill='#24292e'/>
 <!-- breadcrumb chevrons -->
 <path d='M158 201.5 L162.5 206 L158 210.5 M316 201.5 L320.5 206 L316 210.5 M453.5 201.5 L458 206 L453.5 210.5' fill='none' stroke='#24292e' stroke-width='1.8' stroke-linecap='round' stroke-linejoin='round'/>
 <!-- star -->
 <path d='M576.3 195.5 L579.3 202.8 L587 203.3 L581.1 208.3 L583 215.8 L576.3 211.6 L569.6 215.8 L571.5 208.3 L565.6 203.3 L573.3 202.8 Z' fill='none' stroke='#24292e' stroke-width='2' stroke-linejoin='round'/>
 <!-- share -->
 <circle cx='634' cy='198' r='3.6' fill='none' stroke='#24292e' stroke-width='2'/>
 <circle cx='620.5' cy='205.5' r='3.6' fill='none' stroke='#24292e' stroke-width='2'/>
 <circle cx='634' cy='213' r='3.6' fill='none' stroke='#24292e' stroke-width='2'/>
 <path d='M623.7 203.7 L630.8 199.8 M623.7 207.3 L630.8 211.2' stroke='#24292e' stroke-width='2'/>
 <!-- add icon -->
 <rect x='1847' y='202' width='3' height='11' fill='#1f62e0'/>
 <rect x='1852' y='205' width='3' height='8' fill='#1f62e0'/>
 <rect x='1857' y='199' width='3' height='14' fill='#1f62e0'/>
 <rect x='1862' y='203' width='3' height='10' fill='#1f62e0'/>
 <path d='M1869 199.5 V210.5 M1863.5 205 H1874.5' stroke='#ff9830' stroke-width='2.8'/>
 <path d='M1931 203 L1936.5 208.5 L1942 203' fill='none' stroke='#1f62e0' stroke-width='2.2' stroke-linecap='round' stroke-linejoin='round'/>
 <!-- save -->
 <path d='M1988 196.5 H2001 L2005.5 201 V213 A2 2 0 0 1 2003.5 215 H1988 A2 2 0 0 1 1986 213 V198.5 A2 2 0 0 1 1988 196.5 Z' fill='none' stroke='#4a4d52' stroke-width='2.1' stroke-linejoin='round'/>
 <path d='M1990.5 196.5 V202.5 H2000 V196.5 M1990.5 215 V208.5 H2001 V215' fill='none' stroke='#4a4d52' stroke-width='2.1'/>
 <!-- gear -->
 <g transform='translate(2060.4 205.5)'>
  <path d='M-2.2 -11 H2.2 L3 -7.8 L5.7 -6.3 L8.8 -7.3 L11 -3.5 L8.6 -1.3 V1.3 L11 3.5 L8.8 7.3 L5.7 6.3 L3 7.8 L2.2 11 H-2.2 L-3 7.8 L-5.7 6.3 L-8.8 7.3 L-11 3.5 L-8.6 1.3 V-1.3 L-11 -3.5 L-8.8 -7.3 L-5.7 -6.3 L-3 -7.8 Z' fill='none' stroke='#4a4d52' stroke-width='2' stroke-linejoin='round'/>
  <circle r='3.8' fill='none' stroke='#4a4d52' stroke-width='2'/>
 </g>
 <!-- clock -->
 <circle cx='2125.4' cy='205.5' r='10.3' fill='none' stroke='#4a4d52' stroke-width='2.1'/>
 <path d='M2125.4 199.5 V206 H2121' fill='none' stroke='#4a4d52' stroke-width='2' stroke-linecap='round'/>
 <path d='M2290 202.3 L2295 207.5 L2300 202.3' fill='none' stroke='#4a4d52' stroke-width='2' stroke-linecap='round' stroke-linejoin='round'/>
 <!-- zoom out -->
 <circle cx='2344.5' cy='204.3' r='9.3' fill='none' stroke='#4a4d52' stroke-width='2.1'/>
 <path d='M2339.5 204.3 H2349.5 M2351.3 211.2 L2356 216' stroke='#4a4d52' stroke-width='2.1' stroke-linecap='round'/>
 <!-- refresh -->
 <path d='M2402.5 199.5 A10 10 0 0 1 2420.3 205.5 M2418 211.5 A10 10 0 0 1 2400.2 205.5' fill='none' stroke='#4a4d52' stroke-width='2.1' stroke-linecap='round'/>
 <path d='M2401.5 194.8 V200.8 H2407.5 M2419 215.8 V209.8 H2413' fill='none' stroke='#4a4d52' stroke-width='2.1' stroke-linecap='round' stroke-linejoin='round'/>
 <path d='M2456 202.3 L2461 207.5 L2466 202.3' fill='none' stroke='#4a4d52' stroke-width='2' stroke-linecap='round' stroke-linejoin='round'/>
 <rect x='2492' y='187' width='1' height='36' fill='#c9cbcd'/>
 <path d='M2517 210.5 L2524 203.5 L2531 210.5' fill='none' stroke='#4a4d52' stroke-width='2.8' stroke-linecap='round' stroke-linejoin='round'/>
</svg>
<div class='t' style='left:1017px;top:134px;font-size:21px;color:#8a8d91;letter-spacing:0.8px'>Search or jump to...</div>
<div class='t' style='left:1537px;top:135px;font-size:19px;color:#54575b;letter-spacing:0.4px'>ctrl+k</div>
<div class='t' style='left:84px;top:195px;font-size:21px;color:#24292e;letter-spacing:1.05px'>Home</div>
<div class='t' style='left:180px;top:195px;font-size:21px;color:#24292e;letter-spacing:0.85px'>Dashboards</div>
<div class='t' style='left:337px;top:195px;font-size:21px;color:#24292e;letter-spacing:0px'>JF_CUIHU</div>
<div class='t' style='left:474px;top:195px;font-size:21px;color:#6c6f73;letter-spacing:0.6px'>HBase</div>
<div class='t' style='left:1882px;top:195px;font-size:21px;font-weight:400;color:#1f62e0;letter-spacing:2px;-webkit-text-stroke:0.4px #1f62e0'>Add</div>
<div class='t' style='left:2151px;top:195px;font-size:21px;color:#4a4d52;letter-spacing:0.9px'>Last 7 days</div>
<div class='a' style='left:24px;top:259px;width:110px;height:48px;background:#fff;border:1px solid #e6e7e8;border-radius:3px'></div>
<div class='t' style='left:37px;top:273px;font-size:19px;font-weight:400;color:#1f62e0;letter-spacing:0.5px;-webkit-text-stroke:0.35px #1f62e0'>Database</div>
<div class='a' style='left:140px;top:259px;width:276px;height:48px;background:#fff;border:1px solid #c4c6c8;border-radius:3px'></div>
<div class='t' style='left:153px;top:273px;font-size:21px;color:#24292e;letter-spacing:0.9px'>sidp_e3monitordb_pro</div>
<svg class='a' style='left:386px;top:279px' width='12' height='10'><path d='M2 2.5 L6 6.5 L10 2.5' fill='none' stroke='#24292e' stroke-width='2' stroke-linecap='round' stroke-linejoin='round'/></svg>
<div class='a' style='left:440px;top:259px;width:141px;height:48px;background:#fff;border:1px solid #e6e7e8;border-radius:3px'></div>
<div class='t' style='left:453px;top:273px;font-size:19px;font-weight:400;color:#1f62e0;letter-spacing:0.45px;-webkit-text-stroke:0.35px #1f62e0'>ClusterName</div>
<div class='a' style='left:587px;top:259px;width:151px;height:48px;background:#fff;border:1px solid #c4c6c8;border-radius:3px'></div>
<div class='t' style='left:600px;top:273px;font-size:21px;color:#24292e;letter-spacing:0.0px'>JF_CUIHU</div>
<svg class='a' style='left:708.5px;top:279px' width='12' height='10'><path d='M2 2.5 L6 6.5 L10 2.5' fill='none' stroke='#24292e' stroke-width='2' stroke-linecap='round' stroke-linejoin='round'/></svg>
<div class='a' style='left:762px;top:259px;width:143px;height:48px;background:#fff;border:1px solid #e6e7e8;border-radius:3px'></div>
<div class='t' style='left:775px;top:273px;font-size:19px;font-weight:400;color:#1f62e0;letter-spacing:0.72px;-webkit-text-stroke:0.35px #1f62e0'>ActiveMaster</div>
<div class='a' style='left:911px;top:259px;width:255px;height:48px;background:#fff;border:1px solid #c4c6c8;border-radius:3px'></div>
<div class='t' style='left:924px;top:273px;font-size:21px;color:#24292e;letter-spacing:1.27px'>host-10-88-154-201</div>
<svg class='a' style='left:1137px;top:279px' width='12' height='10'><path d='M2 2.5 L6 6.5 L10 2.5' fill='none' stroke='#24292e' stroke-width='2' stroke-linecap='round' stroke-linejoin='round'/></svg>
<svg class='a' style='left:38px;top:337px' width='14' height='12'><path d='M2.5 3 L7 7.5 L11.5 3' fill='none' stroke='#24292e' stroke-width='2' stroke-linecap='round' stroke-linejoin='round'/></svg>
<div class='t' style='left:57.5px;top:329.5px;font-size:24px;font-weight:700;color:#24292e'><svg width='96.00' height='24' viewBox='0 0 4000 1000' style='vertical-align:baseline;margin-bottom:-2.88px;overflow:visible' fill='#24292e'><use href='#gb96c6' x='0'/><use href='#gb7fa4' x='1000'/><use href='#gb6982' x='2000'/><use href='#gb51b5' x='3000'/></svg></div>
<svg class='a' style='left:2388px;top:287px' width='80' height='80' viewBox='2388 287 80 80'>
 <defs><linearGradient id='fg' x1='0' y1='0' x2='1' y2='1'><stop offset='0' stop-color='#7fd0e0'/><stop offset='0.5' stop-color='#b4a8e6'/><stop offset='1' stop-color='#f4a0c4'/></linearGradient></defs>
 <circle cx='2428' cy='327' r='33' fill='#f6f7f7' stroke='url(#fg)' stroke-width='6.2'/>
 <g fill='none' stroke='#000' stroke-width='5.8' stroke-linecap='round'>
  <path d='M2415.5 313.8 L2423.5 318.5'/>
  <path d='M2426.5 320 L2438.5 313.5'/>
  <path d='M2410.5 321.5 L2419.5 327 Q2423 329.5 2423 333'/>
  <path d='M2422.5 337 V344.5'/>
  <path d='M2445 321.5 L2438 325.5'/>
  <path d='M2434 329.5 Q2433 331 2433 334 V345'/>
 </g>
</svg>
<div class='panel' style='left:24px;top:376px;width:303px;height:387px'></div>
<div class='ptitle' style='left:38px;top:390.5px'>HMaster <svg width='84.40' height='21' viewBox='0 0 4019 1000' style='vertical-align:baseline;margin-bottom:-2.52px;overflow:visible' fill='#24292e'><use href='#gm8282' x='0'/><use href='#gm70b9' x='1004'/><use href='#gm603b' x='2009'/><use href='#gm6570' x='3014'/></svg></div>
<svg class='a' style='left:240px;top:390px' width='22' height='22'><circle cx='11' cy='11' r='9.3' fill='none' stroke='#4a4d52' stroke-width='2'/><circle cx='11' cy='7.8' r='1.2' fill='#4a4d52'/><rect x='10' y='10.6' width='2' height='4.7' rx='0.5' fill='#4a4d52'/></svg>
<div class='panel' style='left:339px;top:376px;width:303px;height:387px'></div>
<div class='ptitle' style='left:353px;top:390.5px'>RegionServer <svg width='21.10' height='21' viewBox='0 0 1005 1000' style='vertical-align:baseline;margin-bottom:-2.52px;overflow:visible' fill='#24292e'><use href='#gm8282' x='0'/></svg>...</div>
<svg class='a' style='left:570px;top:390px' width='22' height='22'><circle cx='11' cy='11' r='9.3' fill='none' stroke='#4a4d52' stroke-width='2'/><circle cx='11' cy='7.8' r='1.2' fill='#4a4d52'/><rect x='10' y='10.6' width='2' height='4.7' rx='0.5' fill='#4a4d52'/></svg>
<div class='panel' style='left:656px;top:376px;width:619px;height:387px'></div>
<div class='ptitle' style='left:670px;top:390.5px'><svg width='21.10' height='21' viewBox='0 0 1005 1000' style='vertical-align:baseline;margin-bottom:-2.52px;overflow:visible' fill='#24292e'><use href='#gm88ab' x='0'/></svg> HMaster <svg width='126.60' height='21' viewBox='0 0 6029 1000' style='vertical-align:baseline;margin-bottom:-2.52px;overflow:visible' fill='#24292e'><use href='#gm6807' x='0'/><use href='#gm8bb0' x='1004'/><use href='#gm4e3a' x='2009'/><use href='#gm6b7b' x='3014'/><use href='#gm4ea1' x='4019'/><use href='#gm7684' x='5023'/></svg> RegionServer <svg width='42.20' height='21' viewBox='0 0 2010 1000' style='vertical-align:baseline;margin-bottom:-2.52px;overflow:visible' fill='#24292e'><use href='#gm6570' x='0'/><use href='#gm91cf' x='1004'/></svg></div>
<svg class='a' style='left:1133px;top:390px' width='22' height='22'><circle cx='11' cy='11' r='9.3' fill='none' stroke='#4a4d52' stroke-width='2'/><circle cx='11' cy='7.8' r='1.2' fill='#4a4d52'/><rect x='10' y='10.6' width='2' height='4.7' rx='0.5' fill='#4a4d52'/></svg>
<div class='panel' style='left:1287px;top:376px;width:620px;height:387px'></div>
<div class='ptitle' style='left:1301px;top:390.5px'><svg width='21.10' height='21' viewBox='0 0 1005 1000' style='vertical-align:baseline;margin-bottom:-2.52px;overflow:visible' fill='#24292e'><use href='#gm88ab' x='0'/></svg> HMaster <svg width='126.60' height='21' viewBox='0 0 6029 1000' style='vertical-align:baseline;margin-bottom:-2.52px;overflow:visible' fill='#24292e'><use href='#gm6807' x='0'/><use href='#gm8bb0' x='1004'/><use href='#gm4e3a' x='2009'/><use href='#gm6d3b' x='3014'/><use href='#gm8dc3' x='4019'/><use href='#gm7684' x='5023'/></svg> RegionServer <svg width='42.20' height='21' viewBox='0 0 2010 1000' style='vertical-align:baseline;margin-bottom:-2.52px;overflow:visible' fill='#24292e'><use href='#gm6570' x='0'/><use href='#gm91cf' x='1004'/></svg></div>
<svg class='a' style='left:1764px;top:390px' width='22' height='22'><circle cx='11' cy='11' r='9.3' fill='none' stroke='#4a4d52' stroke-width='2'/><circle cx='11' cy='7.8' r='1.2' fill='#4a4d52'/><rect x='10' y='10.6' width='2' height='4.7' rx='0.5' fill='#4a4d52'/></svg>
<div class='panel' style='left:1917px;top:376px;width:620px;height:387px'></div>
<div class='ptitle' style='left:1931px;top:390.5px'><svg width='253.20' height='21' viewBox='0 0 12057 1000' style='vertical-align:baseline;margin-bottom:-2.52px;overflow:visible' fill='#24292e'><use href='#gm5f53' x='0'/><use href='#gm524d' x='1004'/><use href='#gm6d3b' x='2009'/><use href='#gm8dc3' x='3014'/><use href='#gm7684' x='4019'/><use href='#gm901a' x='5023'/><use href='#gm7528' x='6028'/><use href='#gm5904' x='7033'/><use href='#gm7406' x='8038'/><use href='#gm7ebf' x='9042'/><use href='#gm7a0b' x='10047'/><use href='#gm6570' x='11052'/></svg></div>
<svg class='a' style='left:2210px;top:390px' width='22' height='22'><circle cx='11' cy='11' r='9.3' fill='none' stroke='#4a4d52' stroke-width='2'/><circle cx='11' cy='7.8' r='1.2' fill='#4a4d52'/><rect x='10' y='10.6' width='2' height='4.7' rx='0.5' fill='#4a4d52'/></svg>
<div class='panel' style='left:24px;top:775px;width:620px;height:387px'></div>
<div class='ptitle' style='left:38px;top:789.5px'><svg width='168.80' height='21' viewBox='0 0 8038 1000' style='vertical-align:baseline;margin-bottom:-2.52px;overflow:visible' fill='#24292e'><use href='#gm5f53' x='0'/><use href='#gm524d' x='1004'/><use href='#gm6253' x='2009'/><use href='#gm5f00' x='3014'/><use href='#gm7684' x='4019'/><use href='#gm8fde' x='5023'/><use href='#gm63a5' x='6028'/><use href='#gm6570' x='7033'/></svg></div>
<svg class='a' style='left:232px;top:789px' width='22' height='22'><circle cx='11' cy='11' r='9.3' fill='none' stroke='#4a4d52' stroke-width='2'/><circle cx='11' cy='7.8' r='1.2' fill='#4a4d52'/><rect x='10' y='10.6' width='2' height='4.7' rx='0.5' fill='#4a4d52'/></svg>
<div class='panel' style='left:656px;top:775px;width:619px;height:387px'></div>
<div class='ptitle' style='left:670px;top:789.5px'>HBase <svg width='147.70' height='21' viewBox='0 0 7033 1000' style='vertical-align:baseline;margin-bottom:-2.52px;overflow:visible' fill='#24292e'><use href='#gm96c6' x='0'/><use href='#gm7fa4' x='1004'/><use href='#gm63a5' x='2009'/><use href='#gm6536' x='3014'/><use href='#gm5b57' x='4019'/><use href='#gm8282' x='5023'/><use href='#gm6570' x='6028'/></svg></div>
<svg class='a' style='left:914px;top:789px' width='22' height='22'><circle cx='11' cy='11' r='9.3' fill='none' stroke='#4a4d52' stroke-width='2'/><circle cx='11' cy='7.8' r='1.2' fill='#4a4d52'/><rect x='10' y='10.6' width='2' height='4.7' rx='0.5' fill='#4a4d52'/></svg>
<div class='panel' style='left:1287px;top:775px;width:620px;height:387px'></div>
<div class='ptitle' style='left:1301px;top:789.5px'>HBase <svg width='147.70' height='21' viewBox='0 0 7033 1000' style='vertical-align:baseline;margin-bottom:-2.52px;overflow:visible' fill='#24292e'><use href='#gm96c6' x='0'/><use href='#gm7fa4' x='1004'/><use href='#gm53d1' x='2009'/><use href='#gm9001' x='3014'/><use href='#gm5b57' x='4019'/><use href='#gm8282' x='5023'/><use href='#gm6570' x='6028'/></svg></div>
<svg class='a' style='left:1545px;top:789px' width='22' height='22'><circle cx='11' cy='11' r='9.3' fill='none' stroke='#4a4d52' stroke-width='2'/><circle cx='11' cy='7.8' r='1.2' fill='#4a4d52'/><rect x='10' y='10.6' width='2' height='4.7' rx='0.5' fill='#4a4d52'/></svg>
<div class='panel' style='left:1917px;top:775px;width:620px;height:387px'></div>
<div class='ptitle' style='left:1931px;top:789.5px'><svg width='147.70' height='21' viewBox='0 0 7033 1000' style='vertical-align:baseline;margin-bottom:-2.52px;overflow:visible' fill='#24292e'><use href='#gm8bf7' x='0'/><use href='#gm6c42' x='1004'/><use href='#gm961f' x='2009'/><use href='#gm5217' x='3014'/><use href='#gm603b' x='4019'/><use href='#gm5927' x='5023'/><use href='#gm5c0f' x='6028'/></svg></div>
<svg class='a' style='left:2104px;top:789px' width='22' height='22'><circle cx='11' cy='11' r='9.3' fill='none' stroke='#4a4d52' stroke-width='2'/><circle cx='11' cy='7.8' r='1.2' fill='#4a4d52'/><rect x='10' y='10.6' width='2' height='4.7' rx='0.5' fill='#4a4d52'/></svg>
<div class='panel' style='left:24px;top:1174px;width:620px;height:427px'></div>
<div class='ptitle' style='left:38px;top:1188.5px'><svg width='84.40' height='21' viewBox='0 0 4019 1000' style='vertical-align:baseline;margin-bottom:-2.52px;overflow:visible' fill='#24292e'><use href='#gm603b' x='0'/><use href='#gm8bf7' x='1004'/><use href='#gm6c42' x='2009'/><use href='#gm6570' x='3014'/></svg></div>
<svg class='a' style='left:147px;top:1188px' width='22' height='22'><circle cx='11' cy='11' r='9.3' fill='none' stroke='#4a4d52' stroke-width='2'/><circle cx='11' cy='7.8' r='1.2' fill='#4a4d52'/><rect x='10' y='10.6' width='2' height='4.7' rx='0.5' fill='#4a4d52'/></svg>
<div class='panel' style='left:656px;top:1174px;width:619px;height:427px'></div>
<div class='ptitle' style='left:670px;top:1188.5px'><svg width='84.40' height='21' viewBox='0 0 4019 1000' style='vertical-align:baseline;margin-bottom:-2.52px;overflow:visible' fill='#24292e'><use href='#gm603b' x='0'/><use href='#gm54cd' x='1004'/><use href='#gm5e94' x='2009'/><use href='#gm6570' x='3014'/></svg></div>
<svg class='a' style='left:778px;top:1188px' width='22' height='22'><circle cx='11' cy='11' r='9.3' fill='none' stroke='#4a4d52' stroke-width='2'/><circle cx='11' cy='7.8' r='1.2' fill='#4a4d52'/><rect x='10' y='10.6' width='2' height='4.7' rx='0.5' fill='#4a4d52'/></svg>
<div class='panel' style='left:1287px;top:1174px;width:620px;height:427px'></div>
<div class='ptitle' style='left:1301px;top:1188.5px'>HMaster <svg width='42.20' height='21' viewBox='0 0 2010 1000' style='vertical-align:baseline;margin-bottom:-2.52px;overflow:visible' fill='#24292e'><use href='#gm6267' x='0'/><use href='#gm884c' x='1004'/></svg> Region <svg width='211.00' height='21' viewBox='0 0 10048 1000' style='vertical-align:baseline;margin-bottom:-2.52px;overflow:visible' fill='#24292e'><use href='#gm5206' x='0'/><use href='#gm5e03' x='1004'/><use href='#gm5747' x='2009'/><use href='#gm8861' x='3014'/><use href='#gm64cd' x='4019'/><use href='#gm4f5c' x='5023'/><use href='#gm7684' x='6028'/><use href='#gm603b' x='7033'/><use href='#gm6b21' x='8038'/><use href='#gm6570' x='9042'/></svg></div>
<svg class='a' style='left:1755px;top:1188px' width='22' height='22'><circle cx='11' cy='11' r='9.3' fill='none' stroke='#4a4d52' stroke-width='2'/><circle cx='11' cy='7.8' r='1.2' fill='#4a4d52'/><rect x='10' y='10.6' width='2' height='4.7' rx='0.5' fill='#4a4d52'/></svg>
<div class='panel' style='left:1917px;top:1174px;width:620px;height:427px'></div>
<div class='ptitle' style='left:1931px;top:1188.5px'><svg width='42.20' height='21' viewBox='0 0 2010 1000' style='vertical-align:baseline;margin-bottom:-2.52px;overflow:visible' fill='#24292e'><use href='#gm5f53' x='0'/><use href='#gm524d' x='1004'/></svg> RegionServer <svg width='126.60' height='21' viewBox='0 0 6029 1000' style='vertical-align:baseline;margin-bottom:-2.52px;overflow:visible' fill='#24292e'><use href='#gm4e0a' x='0'/><use href='#gm6b63' x='1004'/><use href='#gm5728' x='2009'/><use href='#gm670d' x='3014'/><use href='#gm52a1' x='4019'/><use href='#gm7684' x='5023'/></svg> Region <svg width='42.20' height='21' viewBox='0 0 2010 1000' style='vertical-align:baseline;margin-bottom:-2.52px;overflow:visible' fill='#24292e'><use href='#gm6570' x='0'/><use href='#gm91cf' x='1004'/></svg></div>
<svg class='a' style='left:2399px;top:1188px' width='22' height='22'><circle cx='11' cy='11' r='9.3' fill='none' stroke='#4a4d52' stroke-width='2'/><circle cx='11' cy='7.8' r='1.2' fill='#4a4d52'/><rect x='10' y='10.6' width='2' height='4.7' rx='0.5' fill='#4a4d52'/></svg>
<div class='t' style='left:45.5px;top:558.8px;font-size:69px;font-weight:500;color:#56a64b;letter-spacing:1.9px;-webkit-text-stroke:1.2px #56a64b'>No data</div>
<div class='t' style='left:411.4px;top:460px;font-size:265.5px;color:#56a64b;-webkit-text-stroke:2px #56a64b;transform:scaleX(1.055);transform-origin:0 0'>6</div>
<svg class='a' style='left:0;top:0' width='2560' height='1455' viewBox='0 0 2560 1455'><line x1='690' y1='473.5' x2='1249.5' y2='473.5' stroke='#e3e4e5' stroke-width='1'/><line x1='690' y1='555.5' x2='1249.5' y2='555.5' stroke='#e3e4e5' stroke-width='1'/><line x1='690' y1='636.5' x2='1249.5' y2='636.5' stroke='#e3e4e5' stroke-width='1'/><line x1='690' y1='718.5' x2='1249.5' y2='718.5' stroke='#e3e4e5' stroke-width='1'/><line x1='738.5' y1='449.5' x2='738.5' y2='724' stroke='#e3e4e5' stroke-width='1'/><line x1='897.5' y1='449.5' x2='897.5' y2='724' stroke='#e3e4e5' stroke-width='1'/><line x1='1055.5' y1='449.5' x2='1055.5' y2='724' stroke='#e3e4e5' stroke-width='1'/><line x1='1214.5' y1='449.5' x2='1214.5' y2='724' stroke='#e3e4e5' stroke-width='1'/><path d='M695.5 718.5 H1249.5 M930.5 718.5 V473.5' stroke='#56a64b' stroke-width='1.4' fill='none'/><text class='ax' x='681.5' y='477.9' text-anchor='end'>6</text><text class='ax' x='681.5' y='559.8' text-anchor='end'>4</text><text class='ax' x='681.5' y='640.5' text-anchor='end'>2</text><text class='ax' x='681.5' y='722.5' text-anchor='end'>0</text><text class='ax' x='738.5' y='745.5' text-anchor='middle'>05/07</text><text class='ax' x='897.4' y='745.5' text-anchor='middle'>05/09</text><text class='ax' x='1055.5' y='745.5' text-anchor='middle'>05/11</text><text class='ax' x='1214.4' y='745.5' text-anchor='middle'>05/13</text><line x1='1335.5' y1='494.5' x2='1880.7' y2='494.5' stroke='#e3e4e5' stroke-width='1'/><line x1='1335.5' y1='550.5' x2='1880.7' y2='550.5' stroke='#e3e4e5' stroke-width='1'/><line x1='1335.5' y1='606.5' x2='1880.7' y2='606.5' stroke='#e3e4e5' stroke-width='1'/><line x1='1335.5' y1='662.5' x2='1880.7' y2='662.5' stroke='#e3e4e5' stroke-width='1'/><line x1='1335.5' y1='718.5' x2='1880.7' y2='718.5' stroke='#e3e4e5' stroke-width='1'/><line x1='1383.5' y1='449.5' x2='1383.5' y2='724' stroke='#e3e4e5' stroke-width='1'/><line x1='1537.5' y1='449.5' x2='1537.5' y2='724' stroke='#e3e4e5' stroke-width='1'/><line x1='1691.5' y1='449.5' x2='1691.5' y2='724' stroke='#e3e4e5' stroke-width='1'/><line x1='1846.5' y1='449.5' x2='1846.5' y2='724' stroke='#e3e4e5' stroke-width='1'/><rect x='1341.9' y='583.3' width='538.8' height='134.70000000000005' fill='#56a64b' fill-opacity='0.2'/><path d='M1341.9 583.5 H1880.7' stroke='#56a64b' stroke-width='1.4'/><text class='ax' x='1327.0' y='498.8' text-anchor='end'>10</text><text class='ax' x='1327.0' y='554.8' text-anchor='end'>7.5</text><text class='ax' x='1327.0' y='610.9' text-anchor='end'>5</text><text class='ax' x='1327.0' y='666.5' text-anchor='end'>2.5</text><text class='ax' x='1327.0' y='722.5' text-anchor='end'>0</text><text class='ax' x='1383.4' y='745.5' text-anchor='middle'>05/07</text><text class='ax' x='1537.3' y='745.5' text-anchor='middle'>05/09</text><text class='ax' x='1691.5' y='745.5' text-anchor='middle'>05/11</text><text class='ax' x='1846.3' y='745.5' text-anchor='middle'>05/13</text><line x1='1966.4' y1='473.5' x2='2510.7' y2='473.5' stroke='#e3e4e5' stroke-width='1'/><line x1='1966.4' y1='522.5' x2='2510.7' y2='522.5' stroke='#e3e4e5' stroke-width='1'/><line x1='1966.4' y1='571.5' x2='2510.7' y2='571.5' stroke='#e3e4e5' stroke-width='1'/><line x1='1966.4' y1='620.5' x2='2510.7' y2='620.5' stroke='#e3e4e5' stroke-width='1'/><line x1='1966.4' y1='669.5' x2='2510.7' y2='669.5' stroke='#e3e4e5' stroke-width='1'/><line x1='1966.4' y1='718.5' x2='2510.7' y2='718.5' stroke='#e3e4e5' stroke-width='1'/><line x1='2014.5' y1='449.5' x2='2014.5' y2='724' stroke='#e3e4e5' stroke-width='1'/><line x1='2168.5' y1='449.5' x2='2168.5' y2='724' stroke='#e3e4e5' stroke-width='1'/><line x1='2322.5' y1='449.5' x2='2322.5' y2='724' stroke='#e3e4e5' stroke-width='1'/><line x1='2476.5' y1='449.5' x2='2476.5' y2='724' stroke='#e3e4e5' stroke-width='1'/><path d='M1973.2 718.5 H2510.7 M1994.5 718.5 V473.5 M2017.5 718.5 V473.5 M2030.5 718.5 V473.5 M2055.5 718.5 V473.5 M2060.5 718.5 V473.5 M2067.5 718.5 V473.5 M2072.5 718.5 V473.5 M2088.5 718.5 V473.5 M2115.5 718.5 V473.5 M2139.5 718.5 V473.5 M2151.5 718.5 V473.5 M2183.5 718.5 V473.5 M2188.5 718.5 V473.5 M2197.5 718.5 V473.5 M2207.5 718.5 V473.5 M2228.5 718.5 V473.5 M2255.5 718.5 V473.5 M2310.5 718.5 V473.5 M2324.5 718.5 V473.5 M2348.5 718.5 V473.5 M2363.5 718.5 V473.5 M2381.5 718.5 V473.5 M2477.5 718.5 V473.5 M2494.5 718.5 V473.5 M2498.5 718.5 V473.5' stroke='#56a64b' stroke-width='1.4' fill='none'/><text class='ax' x='1957.9' y='477.9' text-anchor='end'>1</text><text class='ax' x='1957.9' y='526.8' text-anchor='end'>0.8</text><text class='ax' x='1957.9' y='575.7' text-anchor='end'>0.6</text><text class='ax' x='1957.9' y='624.7' text-anchor='end'>0.4</text><text class='ax' x='1957.9' y='673.6' text-anchor='end'>0.2</text><text class='ax' x='1957.9' y='722.5' text-anchor='end'>0</text><text class='ax' x='2014.5' y='745.5' text-anchor='middle'>05/07</text><text class='ax' x='2168.4' y='745.5' text-anchor='middle'>05/09</text><text class='ax' x='2322.4' y='745.5' text-anchor='middle'>05/11</text><text class='ax' x='2476.3' y='745.5' text-anchor='middle'>05/13</text><line x1='82.7' y1='870.5' x2='618' y2='870.5' stroke='#e3e4e5' stroke-width='1'/><line x1='82.7' y1='926.5' x2='618' y2='926.5' stroke='#e3e4e5' stroke-width='1'/><line x1='82.7' y1='982.5' x2='618' y2='982.5' stroke='#e3e4e5' stroke-width='1'/><line x1='82.7' y1='1038.5' x2='618' y2='1038.5' stroke='#e3e4e5' stroke-width='1'/><line x1='82.7' y1='1094.5' x2='618' y2='1094.5' stroke='#e3e4e5' stroke-width='1'/><line x1='130.5' y1='848.5' x2='130.5' y2='1123' stroke='#e3e4e5' stroke-width='1'/><line x1='281.5' y1='848.5' x2='281.5' y2='1123' stroke='#e3e4e5' stroke-width='1'/><line x1='432.5' y1='848.5' x2='432.5' y2='1123' stroke='#e3e4e5' stroke-width='1'/><line x1='583.5' y1='848.5' x2='583.5' y2='1123' stroke='#e3e4e5' stroke-width='1'/><rect x='89' y='1094.4' width='529' height='22.6' fill='#56a64b' fill-opacity='0.2'/><path d='M89 1094.5 H618 M173.5 1094.5 V870.5 M175.5 1094.5 V870.5 M179.5 1094.5 V870.5 M181.5 1094.5 V870.5 M190.5 1094.5 V870.5' stroke='#56a64b' stroke-width='1.4' fill='none'/><text class='ax' x='74.2' y='874.6' text-anchor='end'>6</text><text class='ax' x='74.2' y='930.7' text-anchor='end'>5.75</text><text class='ax' x='74.2' y='986.7' text-anchor='end'>5.5</text><text class='ax' x='74.2' y='1042.5' text-anchor='end'>5.25</text><text class='ax' x='74.2' y='1098.9' text-anchor='end'>5</text><text class='ax' x='130.5' y='1144.5' text-anchor='middle'>05/07</text><text class='ax' x='281.4' y='1144.5' text-anchor='middle'>05/09</text><text class='ax' x='432.4' y='1144.5' text-anchor='middle'>05/11</text><text class='ax' x='583.3' y='1144.5' text-anchor='middle'>05/13</text><line x1='746.8' y1='870.5' x2='1249.3' y2='870.5' stroke='#e3e4e5' stroke-width='1'/><line x1='746.8' y1='932.5' x2='1249.3' y2='932.5' stroke='#e3e4e5' stroke-width='1'/><line x1='746.8' y1='993.5' x2='1249.3' y2='993.5' stroke='#e3e4e5' stroke-width='1'/><line x1='746.8' y1='1055.5' x2='1249.3' y2='1055.5' stroke='#e3e4e5' stroke-width='1'/><line x1='746.8' y1='1117.5' x2='1249.3' y2='1117.5' stroke='#e3e4e5' stroke-width='1'/><line x1='791.5' y1='848.5' x2='791.5' y2='1123.2' stroke='#e3e4e5' stroke-width='1'/><line x1='933.5' y1='848.5' x2='933.5' y2='1123.2' stroke='#e3e4e5' stroke-width='1'/><line x1='1075.5' y1='848.5' x2='1075.5' y2='1123.2' stroke='#e3e4e5' stroke-width='1'/><line x1='1217.5' y1='848.5' x2='1217.5' y2='1123.2' stroke='#e3e4e5' stroke-width='1'/><path d='M752.5 1117.2 L752.5 951.4 L963.4 877.2 L963.4 1117.2 Z M963.4 1117.2 L963.4 1117 L1249.3 1016.6 L1249.3 1117.2 Z' fill='#56a64b' fill-opacity='0.2'/><path d='M752.5 951.4 L963.4 877.2 L963.4 1117 L1249.3 1016.6' stroke='#56a64b' stroke-width='1.4' fill='none' stroke-linejoin='round'/><text class='ax' x='738.3' y='874.8' text-anchor='end'>256 GiB</text><text class='ax' x='738.3' y='936.7' text-anchor='end'>192 GiB</text><text class='ax' x='738.3' y='997.7' text-anchor='end'>128 GiB</text><text class='ax' x='738.3' y='1059.6' text-anchor='end'>64 GiB</text><text class='ax' x='738.3' y='1121.7' text-anchor='end'>0 B</text><text class='ax' x='791.6' y='1144.5' text-anchor='middle'>05/07</text><text class='ax' x='933.4' y='1144.5' text-anchor='middle'>05/09</text><text class='ax' x='1075.3' y='1144.5' text-anchor='middle'>05/11</text><text class='ax' x='1217.4' y='1144.5' text-anchor='middle'>05/13</text><line x1='1365.8' y1='879.5' x2='1880.7' y2='879.5' stroke='#e3e4e5' stroke-width='1'/><line x1='1365.8' y1='939.5' x2='1880.7' y2='939.5' stroke='#e3e4e5' stroke-width='1'/><line x1='1365.8' y1='998.5' x2='1880.7' y2='998.5' stroke='#e3e4e5' stroke-width='1'/><line x1='1365.8' y1='1057.5' x2='1880.7' y2='1057.5' stroke='#e3e4e5' stroke-width='1'/><line x1='1365.8' y1='1117.5' x2='1880.7' y2='1117.5' stroke='#e3e4e5' stroke-width='1'/><line x1='1410.5' y1='848.5' x2='1410.5' y2='1123.2' stroke='#e3e4e5' stroke-width='1'/><line x1='1556.5' y1='848.5' x2='1556.5' y2='1123.2' stroke='#e3e4e5' stroke-width='1'/><line x1='1702.5' y1='848.5' x2='1702.5' y2='1123.2' stroke='#e3e4e5' stroke-width='1'/><line x1='1848.5' y1='848.5' x2='1848.5' y2='1123.2' stroke='#e3e4e5' stroke-width='1'/><path d='M1372.1 1117.2 L1372.1 955.6 L1587.9 882.7 L1587.9 1117.2 Z M1587.9 1117.2 L1587.9 1116.4 L1880.7 1019.4 L1880.7 1117.2 Z' fill='#56a64b' fill-opacity='0.2'/><path d='M1372.1 955.6 L1587.9 882.7 L1587.9 1116.4 L1880.7 1019.4' stroke='#56a64b' stroke-width='1.4' fill='none' stroke-linejoin='round'/><text class='ax' x='1357.3' y='883.9' text-anchor='end'>16 MiB</text><text class='ax' x='1357.3' y='943.6' text-anchor='end'>12 MiB</text><text class='ax' x='1357.3' y='1002.7' text-anchor='end'>8 MiB</text><text class='ax' x='1357.3' y='1061.8' text-anchor='end'>4 MiB</text><text class='ax' x='1357.3' y='1121.7' text-anchor='end'>0 B</text><text class='ax' x='1410.3' y='1144.5' text-anchor='middle'>05/07</text><text class='ax' x='1556.3' y='1144.5' text-anchor='middle'>05/09</text><text class='ax' x='1702.3' y='1144.5' text-anchor='middle'>05/11</text><text class='ax' x='1848.2' y='1144.5' text-anchor='middle'>05/13</text><line x1='2004.8' y1='893.5' x2='2510.7' y2='893.5' stroke='#e3e4e5' stroke-width='1'/><line x1='2004.8' y1='967.5' x2='2510.7' y2='967.5' stroke='#e3e4e5' stroke-width='1'/><line x1='2004.8' y1='1042.5' x2='2510.7' y2='1042.5' stroke='#e3e4e5' stroke-width='1'/><line x1='2004.8' y1='1117.5' x2='2510.7' y2='1117.5' stroke='#e3e4e5' stroke-width='1'/><line x1='2049.5' y1='848.5' x2='2049.5' y2='1123.2' stroke='#e3e4e5' stroke-width='1'/><line x1='2192.5' y1='848.5' x2='2192.5' y2='1123.2' stroke='#e3e4e5' stroke-width='1'/><line x1='2335.5' y1='848.5' x2='2335.5' y2='1123.2' stroke='#e3e4e5' stroke-width='1'/><line x1='2478.5' y1='848.5' x2='2478.5' y2='1123.2' stroke='#e3e4e5' stroke-width='1'/><path d='M2010.9 1117.5 H2510.7 M2030.5 1117.5 V875.5 M2052.5 1117.5 V875.5 M2064.5 1117.5 V875.5 M2087.5 1117.5 V875.5 M2092.5 1117.5 V875.5 M2098.5 1117.5 V875.5 M2103.5 1117.5 V875.5 M2117.5 1117.5 V875.5 M2142.5 1117.5 V875.5 M2165.5 1117.5 V875.5 M2166.5 1117.5 V875.5 M2176.5 1117.5 V875.5 M2206.5 1117.5 V875.5 M2211.5 1117.5 V875.5 M2219.5 1117.5 V875.5 M2228.5 1117.5 V875.5 M2247.5 1117.5 V875.5 M2248.5 1117.5 V875.5 M2272.5 1117.5 V875.5 M2323.5 1117.5 V875.5 M2337.5 1117.5 V875.5 M2359.5 1117.5 V875.5 M2374.5 1117.5 V875.5 M2390.5 1117.5 V875.5 M2446.5 1117.5 V875.5 M2480.5 1117.5 V875.5 M2495.5 1117.5 V875.5 M2499.5 1117.5 V875.5' stroke='#56a64b' stroke-width='1.4' fill='none'/><text class='ax' x='1996.3' y='897.7' text-anchor='end'>150000</text><text class='ax' x='1996.3' y='971.6' text-anchor='end'>100000</text><text class='ax' x='1996.3' y='1046.7' text-anchor='end'>50000</text><text class='ax' x='1996.3' y='1121.7' text-anchor='end'>0</text><text class='ax' x='2049.4' y='1144.5' text-anchor='middle'>05/07</text><text class='ax' x='2192.3' y='1144.5' text-anchor='middle'>05/09</text><text class='ax' x='2335.3' y='1144.5' text-anchor='middle'>05/11</text><text class='ax' x='2478.2' y='1144.5' text-anchor='middle'>05/13</text><line x1='121.75' y1='1304.5' x2='617.5' y2='1304.5' stroke='#e3e4e5' stroke-width='1'/><line x1='121.75' y1='1374.5' x2='617.5' y2='1374.5' stroke='#e3e4e5' stroke-width='1'/><line x1='121.75' y1='1444.5' x2='617.5' y2='1444.5' stroke='#e3e4e5' stroke-width='1'/><line x1='121.75' y1='1514.5' x2='617.5' y2='1514.5' stroke='#e3e4e5' stroke-width='1'/><line x1='165.5' y1='1247.5' x2='165.5' y2='1606' stroke='#e3e4e5' stroke-width='1'/><line x1='306.5' y1='1247.5' x2='306.5' y2='1606' stroke='#e3e4e5' stroke-width='1'/><line x1='446.5' y1='1247.5' x2='446.5' y2='1606' stroke='#e3e4e5' stroke-width='1'/><line x1='586.5' y1='1247.5' x2='586.5' y2='1606' stroke='#e3e4e5' stroke-width='1'/><path d='M128 1514.25 L128 1353.5 L335.75 1281.25 L335.75 1514.25 Z M335.75 1514.25 L335.75 1514.25 L617.5 1417.5 L617.5 1514.25 Z' fill='#56a64b' fill-opacity='0.2'/><path d='M128 1353.5 L335.75 1281.25 L335.75 1514.25 L617.5 1417.5' stroke='#56a64b' stroke-width='1.4' fill='none' stroke-linejoin='round'/><text class='ax' x='113.25' y='1308.75' text-anchor='end'>1500000</text><text class='ax' x='113.25' y='1378.75' text-anchor='end'>1000000</text><text class='ax' x='113.25' y='1448.75' text-anchor='end'>500000</text><line x1='753.25' y1='1304.5' x2='1249.5' y2='1304.5' stroke='#e3e4e5' stroke-width='1'/><line x1='753.25' y1='1374.5' x2='1249.5' y2='1374.5' stroke='#e3e4e5' stroke-width='1'/><line x1='753.25' y1='1444.5' x2='1249.5' y2='1444.5' stroke='#e3e4e5' stroke-width='1'/><line x1='753.25' y1='1514.5' x2='1249.5' y2='1514.5' stroke='#e3e4e5' stroke-width='1'/><line x1='797.5' y1='1247.5' x2='797.5' y2='1606' stroke='#e3e4e5' stroke-width='1'/><line x1='938.5' y1='1247.5' x2='938.5' y2='1606' stroke='#e3e4e5' stroke-width='1'/><line x1='1078.5' y1='1247.5' x2='1078.5' y2='1606' stroke='#e3e4e5' stroke-width='1'/><line x1='1218.5' y1='1247.5' x2='1218.5' y2='1606' stroke='#e3e4e5' stroke-width='1'/><path d='M760 1514.25 L760 1353.5 L967.5 1281.25 L967.5 1514.25 Z M967.5 1514.25 L967.5 1514.25 L1249.5 1417.5 L1249.5 1514.25 Z' fill='#56a64b' fill-opacity='0.2'/><path d='M760 1353.5 L967.5 1281.25 L967.5 1514.25 L1249.5 1417.5' stroke='#56a64b' stroke-width='1.4' fill='none' stroke-linejoin='round'/><text class='ax' x='744.75' y='1308.75' text-anchor='end'>1500000</text><text class='ax' x='744.75' y='1378.75' text-anchor='end'>1000000</text><text class='ax' x='744.75' y='1448.75' text-anchor='end'>500000</text><line x1='1354.5' y1='1252.5' x2='1880.5' y2='1252.5' stroke='#e3e4e5' stroke-width='1'/><line x1='1354.5' y1='1305.5' x2='1880.5' y2='1305.5' stroke='#e3e4e5' stroke-width='1'/><line x1='1354.5' y1='1358.5' x2='1880.5' y2='1358.5' stroke='#e3e4e5' stroke-width='1'/><line x1='1354.5' y1='1410.5' x2='1880.5' y2='1410.5' stroke='#e3e4e5' stroke-width='1'/><line x1='1354.5' y1='1463.5' x2='1880.5' y2='1463.5' stroke='#e3e4e5' stroke-width='1'/><line x1='1401.5' y1='1247.5' x2='1401.5' y2='1606' stroke='#e3e4e5' stroke-width='1'/><line x1='1550.5' y1='1247.5' x2='1550.5' y2='1606' stroke='#e3e4e5' stroke-width='1'/><line x1='1698.5' y1='1247.5' x2='1698.5' y2='1606' stroke='#e3e4e5' stroke-width='1'/><line x1='1847.5' y1='1247.5' x2='1847.5' y2='1606' stroke='#e3e4e5' stroke-width='1'/><path d='M1361.25 1516 L1361.25 1347.75 L1581.75 1272.5 L1581.75 1516 Z M1581.75 1516 L1581.75 1516 L1880.5 1414.25 L1880.5 1516 Z' fill='#56a64b' fill-opacity='0.2'/><path d='M1361.25 1347.75 L1581.75 1272.5 L1581.75 1516 L1880.5 1414.25' stroke='#56a64b' stroke-width='1.4' fill='none' stroke-linejoin='round'/><text class='ax' x='1346.0' y='1256.75' text-anchor='end'>5000</text><text class='ax' x='1346.0' y='1309.75' text-anchor='end'>4000</text><text class='ax' x='1346.0' y='1362.75' text-anchor='end'>3000</text><text class='ax' x='1346.0' y='1414.75' text-anchor='end'>2000</text><line x1='1972.2' y1='1271.5' x2='2510.7' y2='1271.5' stroke='#e3e4e5' stroke-width='1'/><line x1='1972.2' y1='1332.5' x2='2510.7' y2='1332.5' stroke='#e3e4e5' stroke-width='1'/><line x1='1972.2' y1='1393.5' x2='2510.7' y2='1393.5' stroke='#e3e4e5' stroke-width='1'/><line x1='1972.2' y1='1454.5' x2='2510.7' y2='1454.5' stroke='#e3e4e5' stroke-width='1'/><line x1='2020.5' y1='1247.5' x2='2020.5' y2='1606' stroke='#e3e4e5' stroke-width='1'/><line x1='2172.5' y1='1247.5' x2='2172.5' y2='1606' stroke='#e3e4e5' stroke-width='1'/><line x1='2324.5' y1='1247.5' x2='2324.5' y2='1606' stroke='#e3e4e5' stroke-width='1'/><line x1='2476.5' y1='1247.5' x2='2476.5' y2='1606' stroke='#e3e4e5' stroke-width='1'/><rect x='1979.1' y='1282.6' width='531.5999999999999' height='300' fill='#8a5c5c' fill-opacity='0.65'/><path d='M1979.1 1282.6 H2510.7' stroke='#3d6fd6' stroke-width='2.2'/><path d='M2204.5 1274.2 V1460' stroke='#3d6fd6' stroke-width='1.8'/><text class='ax' x='1963.7' y='1275.6' text-anchor='end'>800</text><text class='ax' x='1963.7' y='1336.6' text-anchor='end'>600</text><text class='ax' x='1963.7' y='1397.5' text-anchor='end'>400</text><text class='ax' x='1963.7' y='1458.5' text-anchor='end'>200</text></svg>
</div></body></html>
